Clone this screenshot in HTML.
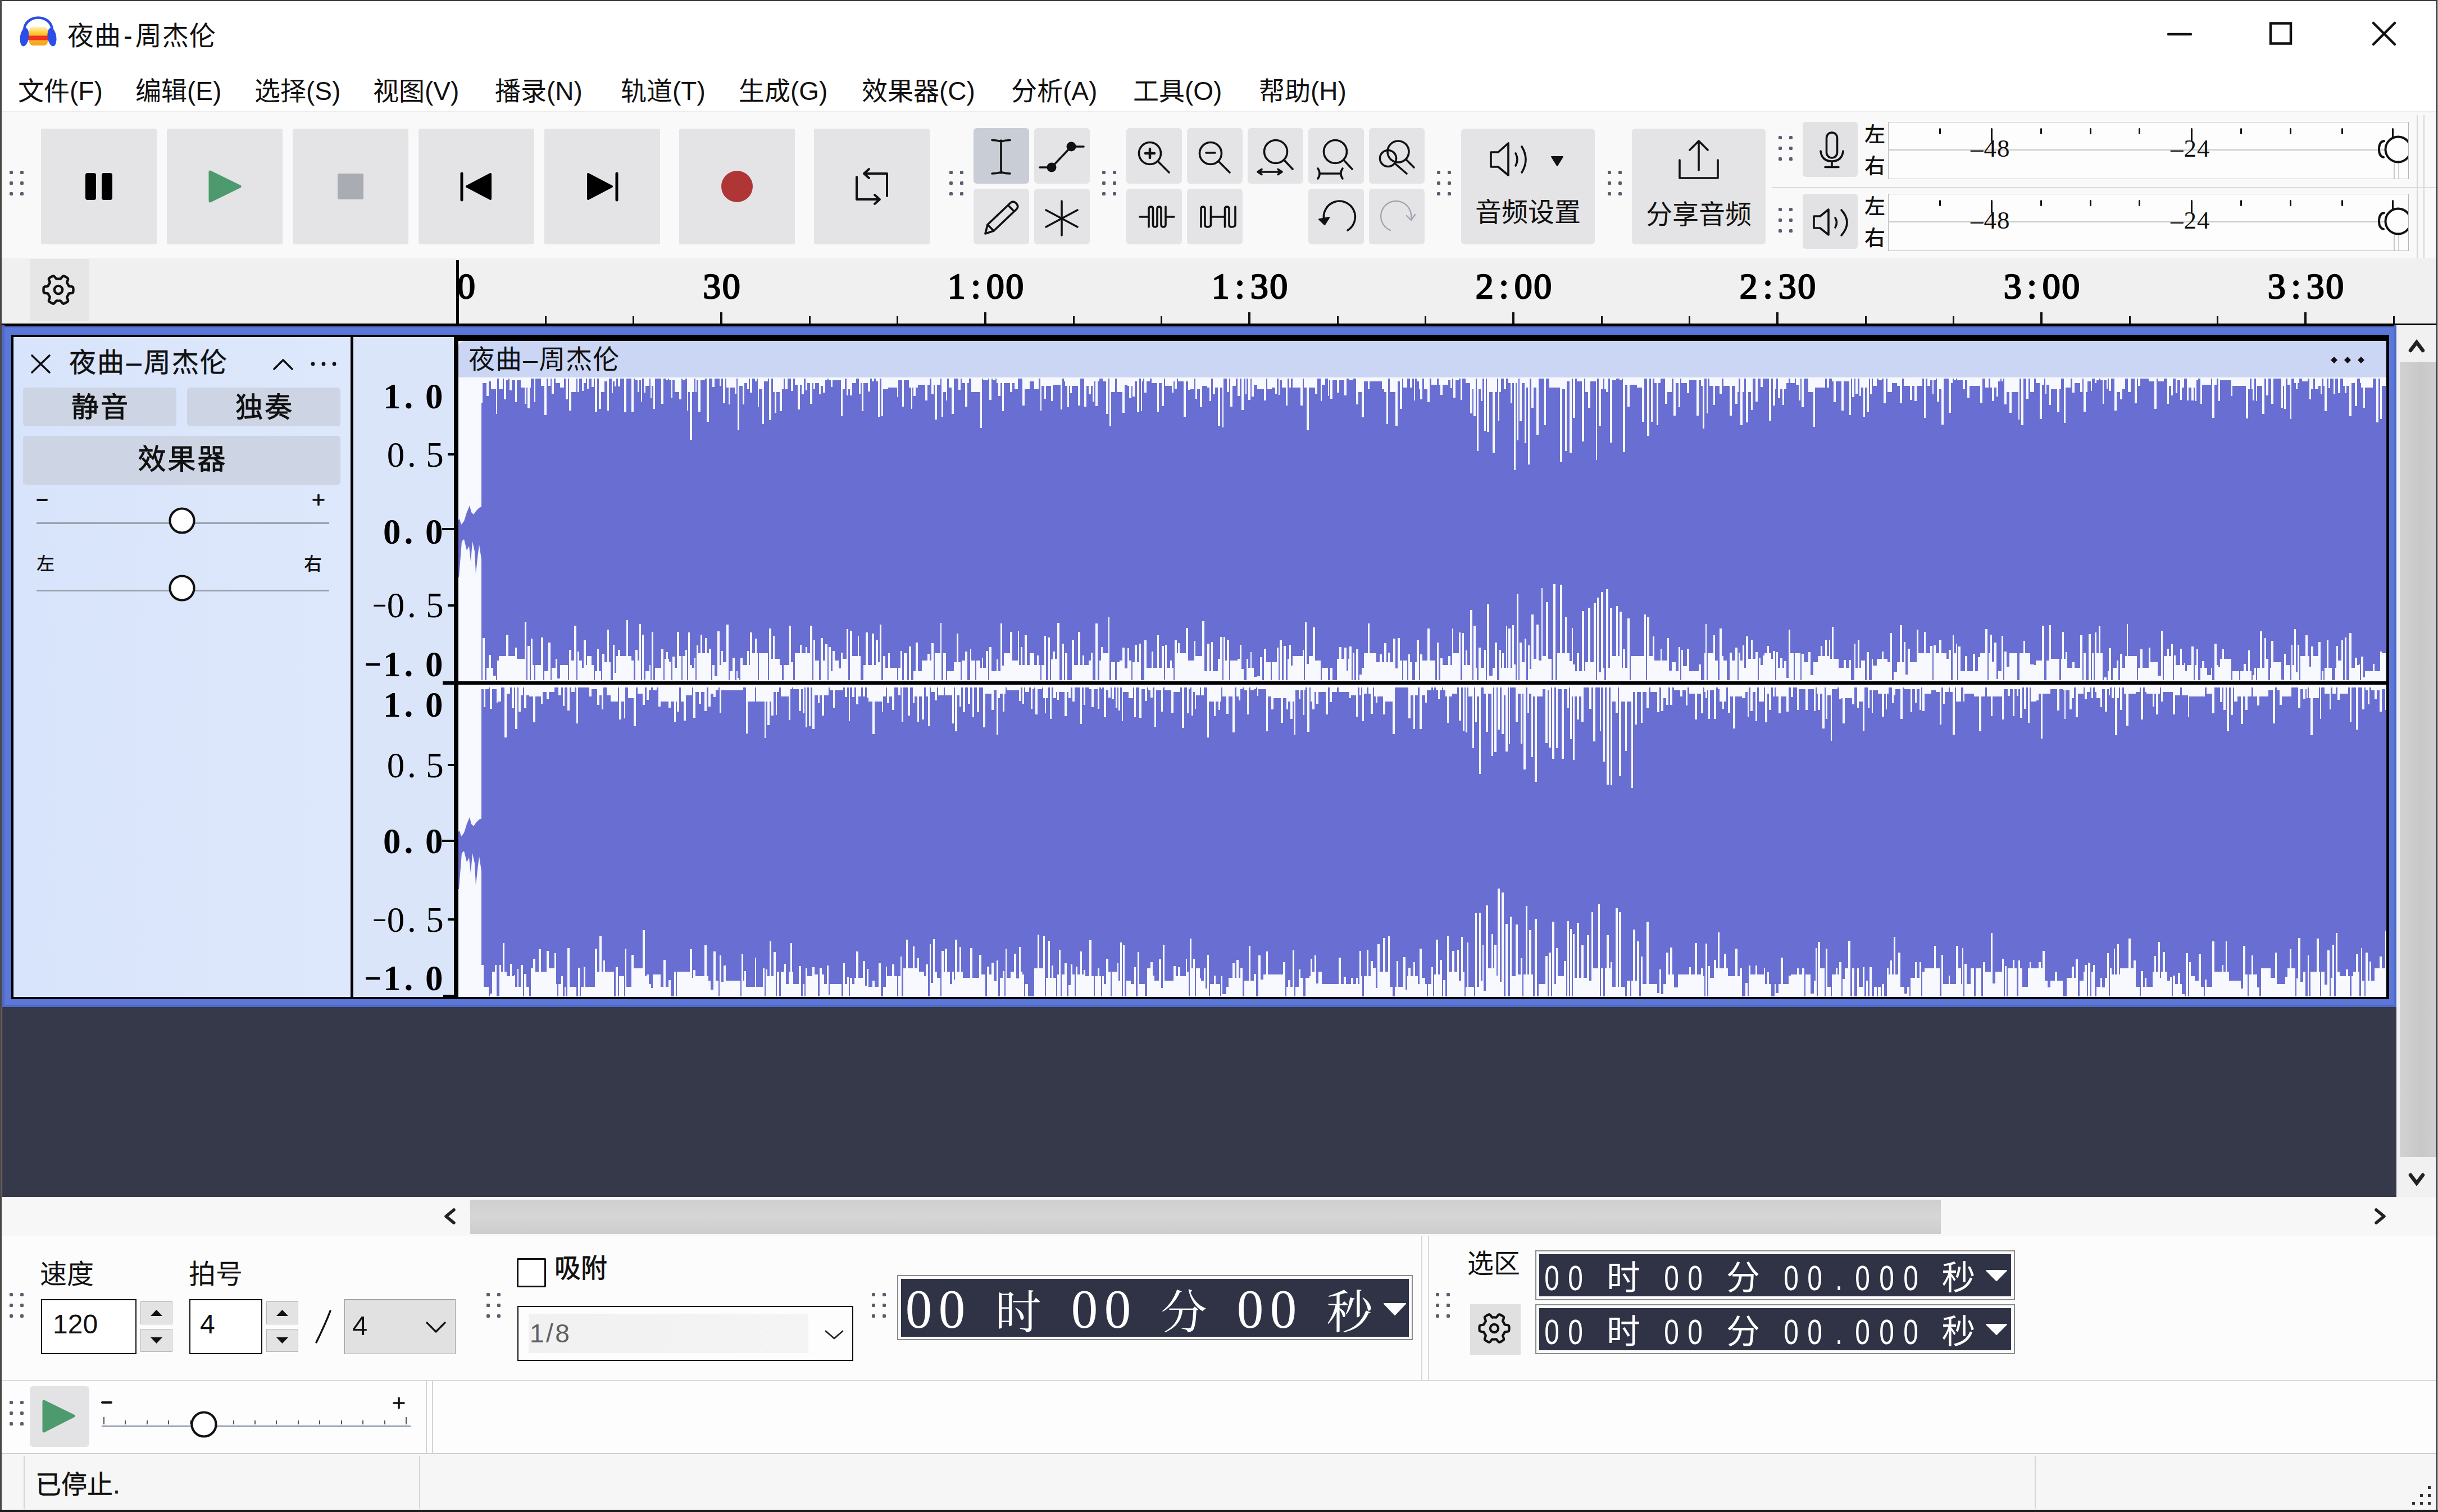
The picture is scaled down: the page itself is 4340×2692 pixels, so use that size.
<!DOCTYPE html>
<html lang="zh-CN"><head><meta charset="utf-8"><title>夜曲-周杰伦</title><style>
html,body{margin:0;padding:0;background:#fff;}
body{width:4340px;height:2692px;overflow:hidden;position:relative;font-family:"Liberation Sans","Noto Sans CJK SC",sans-serif;color:#111;}
#app{position:absolute;left:0;top:0;width:4340px;height:2692px;overflow:hidden;background:#fff;}
#app div,#app svg{position:absolute;box-sizing:border-box;}
#app svg{overflow:visible;}
.btn{background:#e3e3e5;border-radius:4px;}
.c{text-align:center;}
.cell{position:static !important;display:inline-block;text-align:center;overflow:visible;}
</style></head><body><div id="app">
<div style="left:0px;top:0px;width:4340px;height:198px;background:#ffffff;"></div>
<div style="left:0px;top:198px;width:4340px;height:262px;background:#f9f9f9;"></div>
<div style="left:0px;top:198px;width:4340px;height:2px;background:#ececec;"></div>
<div style="left:0px;top:460px;width:4340px;height:116px;background:#f0f0f0;"></div>
<div style="left:0px;top:2131px;width:4340px;height:70px;background:#f7f7f7;"></div>
<div style="left:0px;top:2201px;width:4340px;height:257px;background:#fcfcfc;"></div>
<div style="left:0px;top:2458px;width:4340px;height:130px;background:#fdfdfd;"></div>
<div style="left:0px;top:2588px;width:4340px;height:104px;background:#f6f6f6;"></div>
<svg style="left:34px;top:28px;" width="70" height="58" viewBox="0 0 70 58">
<defs><linearGradient id="ig" x1="0" y1="0" x2="0" y2="1"><stop offset="0" stop-color="#fff3b0"/><stop offset="0.35" stop-color="#fcc630"/><stop offset="1" stop-color="#f6a21a"/></linearGradient></defs>
<rect x="18" y="20" width="33" height="33" rx="7" fill="url(#ig)"/>
<rect x="15" y="35.5" width="39" height="8" fill="#f0321e"/>
<path d="M9 26 C10 -4 58 -4 59 26" fill="none" stroke="#2c4ee6" stroke-width="4.6" stroke-linecap="round"/>
<ellipse cx="9.5" cy="38" rx="7.8" ry="16.5" fill="#2c4ee6" transform="rotate(8 9.5 38)"/>
<ellipse cx="58.5" cy="38" rx="7.8" ry="16.5" fill="#2c4ee6" transform="rotate(-8 58.5 38)"/>
</svg>
<div style="left:120px;top:40px;font-size:47px;line-height:47px;white-space:nowrap;color:#111;letter-spacing:1px;">夜曲<span style="margin:0 4px">-</span>周杰伦</div>
<svg style="left:3855px;top:30px;" width="420" height="60" viewBox="0 0 420 60">
<path d="M5 31 H45" stroke="#111" stroke-width="4.5" stroke-linecap="round"/>
<rect x="187" y="11.5" width="36" height="36" fill="none" stroke="#111" stroke-width="4.5"/>
<path d="M370 11 L408 49 M408 11 L370 49" stroke="#111" stroke-width="4.5" stroke-linecap="round"/>
</svg>
<div style="left:32px;top:139px;font-size:46px;line-height:46px;white-space:nowrap;color:#111;">文件(F)</div>
<div style="left:241px;top:139px;font-size:46px;line-height:46px;white-space:nowrap;color:#111;">编辑(E)</div>
<div style="left:453px;top:139px;font-size:46px;line-height:46px;white-space:nowrap;color:#111;">选择(S)</div>
<div style="left:664px;top:139px;font-size:46px;line-height:46px;white-space:nowrap;color:#111;">视图(V)</div>
<div style="left:881px;top:139px;font-size:46px;line-height:46px;white-space:nowrap;color:#111;">播录(N)</div>
<div style="left:1105px;top:139px;font-size:46px;line-height:46px;white-space:nowrap;color:#111;">轨道(T)</div>
<div style="left:1315px;top:139px;font-size:46px;line-height:46px;white-space:nowrap;color:#111;">生成(G)</div>
<div style="left:1534px;top:139px;font-size:46px;line-height:46px;white-space:nowrap;color:#111;">效果器(C)</div>
<div style="left:1800px;top:139px;font-size:46px;line-height:46px;white-space:nowrap;color:#111;">分析(A)</div>
<div style="left:2017px;top:139px;font-size:46px;line-height:46px;white-space:nowrap;color:#111;">工具(O)</div>
<div style="left:2241px;top:139px;font-size:46px;line-height:46px;white-space:nowrap;color:#111;">帮助(H)</div>
<svg style="left:17px;top:304px;" width="26" height="46" viewBox="0 0 26 46"><rect x="0" y="0" width="6" height="6" rx="1.5" fill="#5a5d70"/><rect x="19" y="0" width="6" height="6" rx="1.5" fill="#5a5d70"/><rect x="0" y="19" width="6" height="6" rx="1.5" fill="#5a5d70"/><rect x="19" y="19" width="6" height="6" rx="1.5" fill="#5a5d70"/><rect x="0" y="38" width="6" height="6" rx="1.5" fill="#5a5d70"/><rect x="19" y="38" width="6" height="6" rx="1.5" fill="#5a5d70"/></svg>
<div style="left:73px;top:229px;width:206px;height:206px;background:#e4e4e6;border-radius:3px;"></div>
<div style="left:297px;top:229px;width:206px;height:206px;background:#e4e4e6;border-radius:3px;"></div>
<div style="left:521px;top:229px;width:206px;height:206px;background:#e4e4e6;border-radius:3px;"></div>
<div style="left:745px;top:229px;width:206px;height:206px;background:#e4e4e6;border-radius:3px;"></div>
<div style="left:969px;top:229px;width:206px;height:206px;background:#e4e4e6;border-radius:3px;"></div>
<div style="left:1209px;top:229px;width:206px;height:206px;background:#e4e4e6;border-radius:3px;"></div>
<div style="left:1449px;top:229px;width:206px;height:206px;background:#e4e4e6;border-radius:3px;"></div>
<svg style="left:73px;top:229px;" width="206" height="206" viewBox="0 0 206 206"><rect x="79" y="79" width="19" height="48" rx="4" fill="#000"/><rect x="108" y="79" width="19" height="48" rx="4" fill="#000"/></svg>
<svg style="left:297px;top:229px;" width="206" height="206" viewBox="0 0 206 206"><path d="M77 77 L130 103 L77 129 Z" fill="#4d9a6f" stroke="#4d9a6f" stroke-width="5" stroke-linejoin="round"/></svg>
<svg style="left:521px;top:229px;" width="206" height="206" viewBox="0 0 206 206"><rect x="80" y="80" width="46" height="46" rx="2" fill="#a9acb3"/></svg>
<svg style="left:745px;top:229px;" width="206" height="206" viewBox="0 0 206 206"><path d="M77 80 V127" stroke="#000" stroke-width="5" stroke-linecap="round"/><path d="M86 103 L128 81 V125 Z" fill="#000" stroke="#000" stroke-width="4" stroke-linejoin="round"/></svg>
<svg style="left:969px;top:229px;" width="206" height="206" viewBox="0 0 206 206"><path d="M129 80 V127" stroke="#000" stroke-width="5" stroke-linecap="round"/><path d="M120 103 L78 81 V125 Z" fill="#000" stroke="#000" stroke-width="4" stroke-linejoin="round"/></svg>
<svg style="left:1209px;top:229px;" width="206" height="206" viewBox="0 0 206 206"><circle cx="103" cy="103" r="28" fill="#b03535"/></svg>
<svg style="left:1449px;top:229px;" width="206" height="206" viewBox="0 0 206 206"><g fill="none" stroke="#111" stroke-width="4" stroke-linecap="round" stroke-linejoin="round"><path d="M76 86 V126 H116"/><path d="M108 118 L117 126 L108 134"/><path d="M130 120 V80 H90"/><path d="M98 72 L89 80 L98 88"/></g></svg>
<svg style="left:1690px;top:304px;" width="26" height="46" viewBox="0 0 26 46"><rect x="0" y="0" width="6" height="6" rx="1.5" fill="#5a5d70"/><rect x="19" y="0" width="6" height="6" rx="1.5" fill="#5a5d70"/><rect x="0" y="19" width="6" height="6" rx="1.5" fill="#5a5d70"/><rect x="19" y="19" width="6" height="6" rx="1.5" fill="#5a5d70"/><rect x="0" y="38" width="6" height="6" rx="1.5" fill="#5a5d70"/><rect x="19" y="38" width="6" height="6" rx="1.5" fill="#5a5d70"/></svg>
<div style="left:1733px;top:228px;width:99px;height:99px;background:#c9cdd6;border-radius:6px;"></div>
<div style="left:1841px;top:228px;width:99px;height:99px;background:#e4e4e6;border-radius:6px;"></div>
<div style="left:1733px;top:336px;width:99px;height:99px;background:#e4e4e6;border-radius:6px;"></div>
<div style="left:1841px;top:336px;width:99px;height:99px;background:#e4e4e6;border-radius:6px;"></div>
<svg style="left:1733px;top:228px;" width="99" height="99" viewBox="0 0 99 99"><g fill="none" stroke="#111" stroke-width="3.6" stroke-linecap="round" stroke-linejoin="round"><path d="M49 22 V80 M33 21.5 Q42 21.5 49 24 Q56 21.5 65 21.5 M33 81 Q42 81 49 78.5 Q56 81 65 81"/></g></svg>
<svg style="left:1841px;top:228px;" width="99" height="99" viewBox="0 0 99 99"><g fill="none" stroke="#111" stroke-width="3.6" stroke-linecap="round" stroke-linejoin="round"><path d="M10 70 H31 L66 33 H88"/></g><circle cx="31" cy="70" r="8.5" fill="#111"/><circle cx="66" cy="33" r="8.5" fill="#111"/></svg>
<svg style="left:1733px;top:336px;" width="99" height="99" viewBox="0 0 99 99"><g fill="none" stroke="#111" stroke-width="3.6" stroke-linecap="round" stroke-linejoin="round"><path d="M21 80 L25 64 L66 25 Q71 21 76 26 Q81 31 77 36 L36 75 Z"/><path d="M25 64 L36 75"/><path d="M62 30 L72 40"/></g></svg>
<svg style="left:1841px;top:336px;" width="99" height="99" viewBox="0 0 99 99"><g fill="none" stroke="#111" stroke-width="3.6" stroke-linecap="round" stroke-linejoin="round"><path d="M49 22 V83 M21 38 L77 68 M21 68 L77 38"/></g></svg>
<svg style="left:1962px;top:304px;" width="26" height="46" viewBox="0 0 26 46"><rect x="0" y="0" width="6" height="6" rx="1.5" fill="#5a5d70"/><rect x="19" y="0" width="6" height="6" rx="1.5" fill="#5a5d70"/><rect x="0" y="19" width="6" height="6" rx="1.5" fill="#5a5d70"/><rect x="19" y="19" width="6" height="6" rx="1.5" fill="#5a5d70"/><rect x="0" y="38" width="6" height="6" rx="1.5" fill="#5a5d70"/><rect x="19" y="38" width="6" height="6" rx="1.5" fill="#5a5d70"/></svg>
<div style="left:2005px;top:228px;width:99px;height:99px;background:#e4e4e6;border-radius:6px;"></div>
<div style="left:2113px;top:228px;width:99px;height:99px;background:#e4e4e6;border-radius:6px;"></div>
<div style="left:2221px;top:228px;width:99px;height:99px;background:#e4e4e6;border-radius:6px;"></div>
<div style="left:2329px;top:228px;width:99px;height:99px;background:#e4e4e6;border-radius:6px;"></div>
<div style="left:2437px;top:228px;width:99px;height:99px;background:#e4e4e6;border-radius:6px;"></div>
<div style="left:2005px;top:336px;width:99px;height:99px;background:#e4e4e6;border-radius:6px;"></div>
<div style="left:2113px;top:336px;width:99px;height:99px;background:#e4e4e6;border-radius:6px;"></div>
<div style="left:2329px;top:336px;width:99px;height:99px;background:#e4e4e6;border-radius:6px;"></div>
<div style="left:2437px;top:336px;width:99px;height:99px;background:#e4e4e6;border-radius:6px;"></div>
<svg style="left:2005px;top:228px;" width="99" height="99" viewBox="0 0 99 99"><g fill="none" stroke="#111" stroke-width="3.6" stroke-linecap="round" stroke-linejoin="round"><circle cx="42" cy="45" r="19.5"/><path d="M57 60 L76 79"/><path d="M34 45 H50 M42 37 V53" stroke-width="4.5"/></g></svg>
<svg style="left:2113px;top:228px;" width="99" height="99" viewBox="0 0 99 99"><g fill="none" stroke="#111" stroke-width="3.6" stroke-linecap="round" stroke-linejoin="round"><circle cx="42" cy="45" r="19.5"/><path d="M57 60 L76 79"/><path d="M34 44 H50"/></g></svg>
<svg style="left:2221px;top:228px;" width="99" height="99" viewBox="0 0 99 99"><g fill="none" stroke="#111" stroke-width="3.6" stroke-linecap="round" stroke-linejoin="round"><circle cx="50" cy="42" r="20.5"/><path d="M65 57 L80 73"/><path d="M19 78 H60 M25 73.5 L18 78 L25 82.5 M54 73.5 L61 78 L54 82.5"/></g></svg>
<svg style="left:2329px;top:228px;" width="99" height="99" viewBox="0 0 99 99"><g fill="none" stroke="#111" stroke-width="3.6" stroke-linecap="round" stroke-linejoin="round"><circle cx="48" cy="42" r="20.5"/><path d="M63 57 L78 73"/><path d="M20 81 H58 M17 72 Q20 76 20 81 Q20 86 17 90 M61 72 Q58 76 58 81 Q58 86 61 90"/></g></svg>
<svg style="left:2437px;top:228px;" width="99" height="99" viewBox="0 0 99 99"><g fill="none" stroke="#111" stroke-width="3.6" stroke-linecap="round" stroke-linejoin="round"><circle cx="52" cy="42" r="19"/><circle cx="34" cy="54" r="14.5"/><path d="M66 56 L80 70 M46 63 L67 81"/></g></svg>
<svg style="left:2005px;top:336px;" width="99" height="99" viewBox="0 0 99 99"><g fill="none" stroke="#111" stroke-width="3.6" stroke-linecap="round" stroke-linejoin="round" stroke-width="3.2"><path d="M24 50 H38 M72 50 H85"/><path d="M40 68 V36 Q40 32 44 32 Q47.5 32 47.5 36 V64 Q47.5 68 51 68 Q55 68 55 64 V36 Q55 32 58.5 32 Q62 32 62 36 V64 Q62 68 66 68 Q70 68 70 64 V32"/></g></svg>
<svg style="left:2113px;top:336px;" width="99" height="99" viewBox="0 0 99 99"><g fill="none" stroke="#111" stroke-width="3.6" stroke-linecap="round" stroke-linejoin="round" stroke-width="3.2"><path d="M43 50 H67"/><path d="M25 68 V36 Q25 32 28.5 32 Q32 32 32 36 V64 Q32 68 36 68 Q42.5 68 42.5 64 V32"/><path d="M67.5 68 V36 Q67.5 32 71 32 Q75 32 75 36 V64 Q75 68 79 68 Q86 68 86 64 V32"/></g></svg>
<svg style="left:2329px;top:336px;" width="99" height="99" viewBox="0 0 99 99"><g fill="none" stroke="#111" stroke-width="3.6" stroke-linecap="round" stroke-linejoin="round"><path d="M28 56 A28 28 0 1 1 70 74"/></g><path d="M20 53 L38 53 L28 64 Z" fill="#111" stroke="#111" stroke-width="2.5" stroke-linejoin="round" transform="rotate(-10 28 58)"/></svg>
<svg style="left:2437px;top:336px;" width="99" height="99" viewBox="0 0 99 99"><g fill="none" stroke="#9ba1ab" stroke-width="2.2" stroke-linecap="round" stroke-linejoin="round"><path d="M75 52 A27 27 0 1 0 38 74"/><path d="M67 48 L75 56 L82 46"/></g></svg>
<svg style="left:2558px;top:304px;" width="26" height="46" viewBox="0 0 26 46"><rect x="0" y="0" width="6" height="6" rx="1.5" fill="#5a5d70"/><rect x="19" y="0" width="6" height="6" rx="1.5" fill="#5a5d70"/><rect x="0" y="19" width="6" height="6" rx="1.5" fill="#5a5d70"/><rect x="19" y="19" width="6" height="6" rx="1.5" fill="#5a5d70"/><rect x="0" y="38" width="6" height="6" rx="1.5" fill="#5a5d70"/><rect x="19" y="38" width="6" height="6" rx="1.5" fill="#5a5d70"/></svg>
<div style="left:2601px;top:229px;width:238px;height:206px;background:#e4e4e6;border-radius:6px;"></div>
<svg style="left:2601px;top:229px;" width="238" height="206" viewBox="0 0 238 206"><g fill="none" stroke="#111" stroke-width="3.6" stroke-linecap="round" stroke-linejoin="round" stroke-width="4"><path d="M53 42 H66 L84 26 V83 L66 68 H53 Z"/><path d="M97 44 Q103 55 97 66"/><path d="M108 32 Q122 55 108 78" /><path d="M119 24 Q138 55 119 86" stroke-width="0"/></g><path d="M161 50 H181 L171 66 Z" fill="#111" stroke="#111" stroke-width="2" stroke-linejoin="round"/></svg>
<div style="left:2601px;top:354px;font-size:47px;line-height:47px;white-space:nowrap;width:238px;text-align:center;color:#111;">音频设置</div>
<svg style="left:2862px;top:304px;" width="26" height="46" viewBox="0 0 26 46"><rect x="0" y="0" width="6" height="6" rx="1.5" fill="#5a5d70"/><rect x="19" y="0" width="6" height="6" rx="1.5" fill="#5a5d70"/><rect x="0" y="19" width="6" height="6" rx="1.5" fill="#5a5d70"/><rect x="19" y="19" width="6" height="6" rx="1.5" fill="#5a5d70"/><rect x="0" y="38" width="6" height="6" rx="1.5" fill="#5a5d70"/><rect x="19" y="38" width="6" height="6" rx="1.5" fill="#5a5d70"/></svg>
<div style="left:2905px;top:229px;width:238px;height:206px;background:#e4e4e6;border-radius:6px;"></div>
<svg style="left:2905px;top:229px;" width="238" height="206" viewBox="0 0 238 206"><g fill="none" stroke="#111" stroke-width="3.6" stroke-linecap="round" stroke-linejoin="round" stroke-width="4.2"><path d="M85 56 V88 H153 V56"/><path d="M119 74 V24 M103 38 L119 22 L135 38"/></g></svg>
<div style="left:2905px;top:358px;font-size:47px;line-height:47px;white-space:nowrap;width:238px;text-align:center;color:#111;">分享音频</div>
<div style="left:3155px;top:333px;width:1185px;height:2px;background:#dcdcdc;"></div>
<div style="left:4302px;top:205px;width:2px;height:255px;background:#d8d8d8;"></div>
<div style="left:4314px;top:205px;width:2px;height:255px;background:#d8d8d8;"></div>
<svg style="left:3166px;top:242px;" width="26" height="46" viewBox="0 0 26 46"><rect x="0" y="0" width="6" height="6" rx="1.5" fill="#5a5d70"/><rect x="19" y="0" width="6" height="6" rx="1.5" fill="#5a5d70"/><rect x="0" y="19" width="6" height="6" rx="1.5" fill="#5a5d70"/><rect x="19" y="19" width="6" height="6" rx="1.5" fill="#5a5d70"/><rect x="0" y="38" width="6" height="6" rx="1.5" fill="#5a5d70"/><rect x="19" y="38" width="6" height="6" rx="1.5" fill="#5a5d70"/></svg>
<div style="left:3209px;top:217px;width:98px;height:98px;background:#e2e2e4;border-radius:6px;"></div>
<svg style="left:3209px;top:217px;" width="98" height="98" viewBox="0 0 98 98"><g fill="none" stroke="#111" stroke-width="3.6" stroke-linecap="round" stroke-linejoin="round" stroke-width="3.8"><rect x="42.5" y="19" width="19" height="45" rx="9.5"/><path d="M32 52 Q34 70 52 70 Q70 70 72 52"/><path d="M52 71 V79 M40 80.5 H64"/></g></svg>
<div style="left:3319px;top:222px;font-size:37px;line-height:37px;white-space:nowrap;color:#111;font-weight:500;">左</div>
<div style="left:3319px;top:278px;font-size:37px;line-height:37px;white-space:nowrap;color:#111;font-weight:500;">右</div>
<div style="left:3361px;top:217px;width:927px;height:102px;background:#fdfdfd;border:1.5px solid #b8b8b8;"></div>
<div style="left:3363px;top:266px;width:923px;height:1.5px;background:#c8c8c8;"></div>
<div style="left:4261px;top:289px;width:1.5px;height:29px;background:#c8c8c8;"></div>
<div style="left:4269px;top:289px;width:1.5px;height:29px;background:#d0d0d0;"></div>
<div style="left:3452px;top:228px;width:3.4px;height:11px;background:#111;border-radius:2px;"></div>
<div style="left:3544px;top:228px;width:3.4px;height:24px;background:#111;border-radius:2px;"></div>
<div style="left:3632px;top:228px;width:3.4px;height:11px;background:#111;border-radius:2px;"></div>
<div style="left:3720px;top:228px;width:3.4px;height:11px;background:#111;border-radius:2px;"></div>
<div style="left:3807px;top:228px;width:3.4px;height:11px;background:#111;border-radius:2px;"></div>
<div style="left:3900px;top:228px;width:3.4px;height:24px;background:#111;border-radius:2px;"></div>
<div style="left:3988px;top:228px;width:3.4px;height:11px;background:#111;border-radius:2px;"></div>
<div style="left:4076px;top:228px;width:3.4px;height:11px;background:#111;border-radius:2px;"></div>
<div style="left:4168px;top:228px;width:3.4px;height:11px;background:#111;border-radius:2px;"></div>
<div style="left:4258px;top:228px;width:3.4px;height:24px;background:#111;border-radius:2px;"></div>
<div style="left:3508px;top:242px;font-size:45px;line-height:45px;white-space:nowrap;color:#111;font-family:'Liberation Serif',serif;letter-spacing:1px;">–48</div>
<div style="left:3864px;top:242px;font-size:45px;line-height:45px;white-space:nowrap;color:#111;font-family:'Liberation Serif',serif;letter-spacing:1px;">–24</div>
<svg style="left:4227px;top:218px;overflow:hidden;" width="60" height="100" viewBox="0 0 60 100"><circle cx="42" cy="48" r="22.5" fill="#fdfdfd" stroke="#111" stroke-width="4"/><path d="M17 33 Q8 34 8 48 Q8 60 16 62" fill="none" stroke="#111" stroke-width="4" stroke-linecap="round"/></svg>
<svg style="left:3166px;top:370px;" width="26" height="46" viewBox="0 0 26 46"><rect x="0" y="0" width="6" height="6" rx="1.5" fill="#5a5d70"/><rect x="19" y="0" width="6" height="6" rx="1.5" fill="#5a5d70"/><rect x="0" y="19" width="6" height="6" rx="1.5" fill="#5a5d70"/><rect x="19" y="19" width="6" height="6" rx="1.5" fill="#5a5d70"/><rect x="0" y="38" width="6" height="6" rx="1.5" fill="#5a5d70"/><rect x="19" y="38" width="6" height="6" rx="1.5" fill="#5a5d70"/></svg>
<div style="left:3209px;top:345px;width:98px;height:98px;background:#e2e2e4;border-radius:6px;"></div>
<svg style="left:3209px;top:345px;" width="98" height="98" viewBox="0 0 98 98"><g fill="none" stroke="#111" stroke-width="3.6" stroke-linecap="round" stroke-linejoin="round" stroke-width="3.8"><path d="M20 40 H31 L46 28 V73 L31 61 H20 Z"/><path d="M58 43 Q63 51 58 60"/><path d="M69 29 Q89 51 69 74"/></g></svg>
<div style="left:3319px;top:350px;font-size:37px;line-height:37px;white-space:nowrap;color:#111;font-weight:500;">左</div>
<div style="left:3319px;top:406px;font-size:37px;line-height:37px;white-space:nowrap;color:#111;font-weight:500;">右</div>
<div style="left:3361px;top:345px;width:927px;height:102px;background:#fdfdfd;border:1.5px solid #b8b8b8;"></div>
<div style="left:3363px;top:394px;width:923px;height:1.5px;background:#c8c8c8;"></div>
<div style="left:4261px;top:417px;width:1.5px;height:29px;background:#c8c8c8;"></div>
<div style="left:4269px;top:417px;width:1.5px;height:29px;background:#d0d0d0;"></div>
<div style="left:3452px;top:356px;width:3.4px;height:11px;background:#111;border-radius:2px;"></div>
<div style="left:3544px;top:356px;width:3.4px;height:24px;background:#111;border-radius:2px;"></div>
<div style="left:3632px;top:356px;width:3.4px;height:11px;background:#111;border-radius:2px;"></div>
<div style="left:3720px;top:356px;width:3.4px;height:11px;background:#111;border-radius:2px;"></div>
<div style="left:3807px;top:356px;width:3.4px;height:11px;background:#111;border-radius:2px;"></div>
<div style="left:3900px;top:356px;width:3.4px;height:24px;background:#111;border-radius:2px;"></div>
<div style="left:3988px;top:356px;width:3.4px;height:11px;background:#111;border-radius:2px;"></div>
<div style="left:4076px;top:356px;width:3.4px;height:11px;background:#111;border-radius:2px;"></div>
<div style="left:4168px;top:356px;width:3.4px;height:11px;background:#111;border-radius:2px;"></div>
<div style="left:4258px;top:356px;width:3.4px;height:24px;background:#111;border-radius:2px;"></div>
<div style="left:3508px;top:370px;font-size:45px;line-height:45px;white-space:nowrap;color:#111;font-family:'Liberation Serif',serif;letter-spacing:1px;">–48</div>
<div style="left:3864px;top:370px;font-size:45px;line-height:45px;white-space:nowrap;color:#111;font-family:'Liberation Serif',serif;letter-spacing:1px;">–24</div>
<svg style="left:4227px;top:346px;overflow:hidden;" width="60" height="100" viewBox="0 0 60 100"><circle cx="42" cy="48" r="22.5" fill="#fdfdfd" stroke="#111" stroke-width="4"/><path d="M17 33 Q8 34 8 48 Q8 60 16 62" fill="none" stroke="#111" stroke-width="4" stroke-linecap="round"/></svg>
<div style="left:53px;top:461px;width:106px;height:110px;background:#e6e6e6;"></div>
<svg style="left:64px;top:476px" width="80" height="80" viewBox="-40 -40 80 80"><g fill="none" stroke="#111" stroke-width="4.4" stroke-linejoin="round"><path d="M26.5 0.0 L26.5 1.2 L26.4 2.3 L26.3 3.5 L26.0 4.6 L24.7 5.5 L22.3 6.0 L19.9 6.3 L18.5 6.7 L18.1 7.5 L17.8 8.3 L17.4 9.1 L17.0 9.8 L16.5 10.5 L16.1 11.2 L15.6 11.9 L15.1 12.7 L15.4 14.1 L16.3 16.3 L17.1 18.6 L17.0 20.2 L16.1 21.0 L15.2 21.7 L14.2 22.3 L13.3 22.9 L12.2 23.5 L11.2 24.0 L10.1 24.5 L9.0 24.8 L7.6 24.1 L6.0 22.3 L4.5 20.4 L3.4 19.4 L2.6 19.4 L1.7 19.5 L0.9 19.6 L0.0 19.6 L-0.9 19.6 L-1.7 19.5 L-2.6 19.4 L-3.4 19.4 L-4.5 20.4 L-6.0 22.3 L-7.6 24.1 L-9.0 24.8 L-10.1 24.5 L-11.2 24.0 L-12.2 23.5 L-13.2 22.9 L-14.2 22.3 L-15.2 21.7 L-16.1 21.0 L-17.0 20.2 L-17.1 18.6 L-16.3 16.3 L-15.4 14.1 L-15.1 12.7 L-15.6 11.9 L-16.1 11.2 L-16.5 10.5 L-17.0 9.8 L-17.4 9.1 L-17.8 8.3 L-18.1 7.5 L-18.5 6.7 L-19.9 6.3 L-22.3 6.0 L-24.7 5.5 L-26.0 4.6 L-26.3 3.5 L-26.4 2.3 L-26.5 1.2 L-26.5 0.0 L-26.5 -1.2 L-26.4 -2.3 L-26.3 -3.5 L-26.0 -4.6 L-24.7 -5.5 L-22.3 -6.0 L-19.9 -6.3 L-18.5 -6.7 L-18.1 -7.5 L-17.8 -8.3 L-17.4 -9.1 L-17.0 -9.8 L-16.5 -10.5 L-16.1 -11.2 L-15.6 -11.9 L-15.1 -12.7 L-15.4 -14.1 L-16.3 -16.3 L-17.1 -18.6 L-17.0 -20.2 L-16.1 -21.0 L-15.2 -21.7 L-14.2 -22.3 L-13.3 -22.9 L-12.2 -23.5 L-11.2 -24.0 L-10.1 -24.5 L-9.0 -24.8 L-7.6 -24.1 L-6.0 -22.3 L-4.5 -20.4 L-3.4 -19.4 L-2.6 -19.4 L-1.7 -19.5 L-0.9 -19.6 L-0.0 -19.6 L0.9 -19.6 L1.7 -19.5 L2.6 -19.4 L3.4 -19.4 L4.5 -20.4 L6.0 -22.3 L7.6 -24.1 L9.0 -24.8 L10.1 -24.5 L11.2 -24.0 L12.2 -23.5 L13.2 -22.9 L14.2 -22.3 L15.2 -21.7 L16.1 -21.0 L17.0 -20.2 L17.1 -18.6 L16.3 -16.3 L15.4 -14.1 L15.1 -12.7 L15.6 -11.9 L16.1 -11.2 L16.5 -10.5 L17.0 -9.8 L17.4 -9.1 L17.8 -8.3 L18.1 -7.5 L18.5 -6.7 L19.9 -6.3 L22.3 -6.0 L24.7 -5.5 L26.0 -4.6 L26.3 -3.5 L26.4 -2.3 L26.5 -1.2Z"/><circle cx="0" cy="0" r="7.155"/></g></svg>
<div style="left:812px;top:463px;width:5px;height:114px;background:#000;"></div>
<div style="left:970px;top:563px;width:3px;height:13px;background:#111;"></div>
<div style="left:1126px;top:563px;width:3px;height:13px;background:#111;"></div>
<div style="left:1282px;top:556px;width:4px;height:20px;background:#111;"></div>
<div style="left:1440px;top:563px;width:3px;height:13px;background:#111;"></div>
<div style="left:1596px;top:563px;width:3px;height:13px;background:#111;"></div>
<div style="left:1752px;top:556px;width:4px;height:20px;background:#111;"></div>
<div style="left:1910px;top:563px;width:3px;height:13px;background:#111;"></div>
<div style="left:2066px;top:563px;width:3px;height:13px;background:#111;"></div>
<div style="left:2222px;top:556px;width:4px;height:20px;background:#111;"></div>
<div style="left:2380px;top:563px;width:3px;height:13px;background:#111;"></div>
<div style="left:2536px;top:563px;width:3px;height:13px;background:#111;"></div>
<div style="left:2692px;top:556px;width:4px;height:20px;background:#111;"></div>
<div style="left:2850px;top:563px;width:3px;height:13px;background:#111;"></div>
<div style="left:3006px;top:563px;width:3px;height:13px;background:#111;"></div>
<div style="left:3162px;top:556px;width:4px;height:20px;background:#111;"></div>
<div style="left:3320px;top:563px;width:3px;height:13px;background:#111;"></div>
<div style="left:3476px;top:563px;width:3px;height:13px;background:#111;"></div>
<div style="left:3632px;top:556px;width:4px;height:20px;background:#111;"></div>
<div style="left:3790px;top:563px;width:3px;height:13px;background:#111;"></div>
<div style="left:3946px;top:563px;width:3px;height:13px;background:#111;"></div>
<div style="left:4102px;top:556px;width:4px;height:20px;background:#111;"></div>
<div style="left:4260px;top:563px;width:3px;height:13px;background:#111;"></div>
<div style="left:812.75px;top:478px;font-size:64px;line-height:64px;white-space:nowrap;font-family:'Liberation Serif',serif;font-weight:normal;color:#000;-webkit-text-stroke:2.3px #000;"><span class="cell" style="width:34.5px;">0</span></div>
<div style="left:812px;top:463px;width:5px;height:114px;background:#000;"></div>
<div style="left:1250.0px;top:478px;font-size:64px;line-height:64px;white-space:nowrap;font-family:'Liberation Serif',serif;font-weight:normal;color:#000;-webkit-text-stroke:2.3px #000;"><span class="cell" style="width:34.5px;">3</span><span class="cell" style="width:34.5px;">0</span></div>
<div style="left:1685.5px;top:478px;font-size:64px;line-height:64px;white-space:nowrap;font-family:'Liberation Serif',serif;font-weight:normal;color:#000;-webkit-text-stroke:2.3px #000;"><span class="cell" style="width:34.5px;">1</span><span class="cell" style="width:34.5px;">:</span><span class="cell" style="width:34.5px;">0</span><span class="cell" style="width:34.5px;">0</span></div>
<div style="left:2155.5px;top:478px;font-size:64px;line-height:64px;white-space:nowrap;font-family:'Liberation Serif',serif;font-weight:normal;color:#000;-webkit-text-stroke:2.3px #000;"><span class="cell" style="width:34.5px;">1</span><span class="cell" style="width:34.5px;">:</span><span class="cell" style="width:34.5px;">3</span><span class="cell" style="width:34.5px;">0</span></div>
<div style="left:2625.5px;top:478px;font-size:64px;line-height:64px;white-space:nowrap;font-family:'Liberation Serif',serif;font-weight:normal;color:#000;-webkit-text-stroke:2.3px #000;"><span class="cell" style="width:34.5px;">2</span><span class="cell" style="width:34.5px;">:</span><span class="cell" style="width:34.5px;">0</span><span class="cell" style="width:34.5px;">0</span></div>
<div style="left:3095.5px;top:478px;font-size:64px;line-height:64px;white-space:nowrap;font-family:'Liberation Serif',serif;font-weight:normal;color:#000;-webkit-text-stroke:2.3px #000;"><span class="cell" style="width:34.5px;">2</span><span class="cell" style="width:34.5px;">:</span><span class="cell" style="width:34.5px;">3</span><span class="cell" style="width:34.5px;">0</span></div>
<div style="left:3565.5px;top:478px;font-size:64px;line-height:64px;white-space:nowrap;font-family:'Liberation Serif',serif;font-weight:normal;color:#000;-webkit-text-stroke:2.3px #000;"><span class="cell" style="width:34.5px;">3</span><span class="cell" style="width:34.5px;">:</span><span class="cell" style="width:34.5px;">0</span><span class="cell" style="width:34.5px;">0</span></div>
<div style="left:4035.5px;top:478px;font-size:64px;line-height:64px;white-space:nowrap;font-family:'Liberation Serif',serif;font-weight:normal;color:#000;-webkit-text-stroke:2.3px #000;"><span class="cell" style="width:34.5px;">3</span><span class="cell" style="width:34.5px;">:</span><span class="cell" style="width:34.5px;">3</span><span class="cell" style="width:34.5px;">0</span></div>
<div style="left:0px;top:575.5px;width:4266px;height:5.5px;background:#000;"></div>
<div style="left:4266px;top:576px;width:71px;height:3.2px;background:#000;"></div>
<div style="left:3px;top:581px;width:4263px;height:1212px;background:#5b78d8;"></div>
<div style="left:3px;top:581px;width:4263px;height:2px;background:#4a63c0;"></div>
<div style="left:4px;top:579px;width:4px;height:1214px;background:#4f69c8;"></div>
<div style="left:4262px;top:579px;width:4px;height:1214px;background:#4f69c8;"></div>
<div style="left:4px;top:1789px;width:4262px;height:4px;background:#4f69c8;"></div>
<div style="left:20px;top:596px;width:4232.5px;height:1183px;background:#000;"></div>
<div style="left:24px;top:600px;width:600px;height:1175px;background:linear-gradient(90deg,#d8e4fb,#dee8fc);"></div>
<div style="left:629px;top:600px;width:179px;height:1175px;background:#dbe5fa;"></div>
<div style="left:816px;top:607px;width:3432px;height:606px;background:#f8f9fe;"></div>
<div style="left:816px;top:1219px;width:3432px;height:556px;background:#f8f9fe;"></div>
<div style="left:788px;top:1213px;width:3459px;height:6px;background:#000;"></div>
<div style="left:816px;top:607px;width:3432px;height:65px;background:#cbd6f5;border-top-left-radius:11px;"></div>
<div style="left:834px;top:616px;font-size:47px;line-height:47px;white-space:nowrap;color:#111;letter-spacing:1px;">夜曲<span style="margin:0 1px">–</span>周杰伦</div>
<svg style="left:4143px;top:631px;" width="70" height="20" viewBox="0 0 70 20"><g fill="#111"><path d="M12 4 L18 10 L12 16 L6 10Z M36 4 L42 10 L36 16 L30 10Z M60 4 L66 10 L60 16 L54 10Z"/></g></svg>
<div style="left:4px;top:1793px;width:4262px;height:338px;background:#353949;"></div>
<svg style="left:0;top:0" width="4340" height="2692" viewBox="0 0 4340 2692"><g fill="#696fd2" shape-rendering="crispEdges"><path d="M857 942V717h2V682h4V682h3V705h4V679h4V693h4V693h5V737h2V674h3V693h7V674h2V711h4V677h4V674h2V695h4V677h6V716h3V677h7V690h7V719h3V690h2V727h4V690h2V674h3V674h3V716h2V674h7V674h3V687h4V687h2V739h4V674h3V687h4V674h2V701h4V674h3V682h3V682h5V690h7V674h3V711h4V674h2V731h4V698h5V698h4V674h2V698h3V674h3V674h2V696h3V682h4V674h2V692h3V674h5V689h4V674h2V733h4V674h3V728h4V698h2V698h4V679h5V731h3V674h3V674h2V700h2V679h3V688h3V674h3V688h4V674h7V734h4V674h3V674h6V733h4V674h3V677h4V698h3V677h3V715h2V674h3V699h3V687h7V674h2V709h2V687h3V728h3V674h3V674h3V674h3V674h2V719h4V674h2V674h3V677h3V674h2V677h4V708h2V677h4V698h4V698h4V711h4V674h2V677h5V674h3V731h2V698h3V783h4V698h4V674h2V698h2V677h3V733h4V677h3V677h5V674h3V751h4V674h4V674h2V689h4V674h5V674h4V687h3V674h3V718h4V674h2V690h4V720h2V690h5V690h4V701h3V674h2V766h3V687h2V687h4V720h3V682h5V693h3V674h2V699h4V674h5V679h3V674h2V724h2V693h6V755h3V679h7V674h2V748h4V674h3V698h3V735h3V698h6V732h4V693h3V674h2V693h5V674h3V674h3V696h4V674h3V685h5V729h4V685h3V702h4V674h3V695h3V682h5V719h4V682h2V693h3V682h7V702h3V687h4V699h4V677h4V674h2V677h4V689h3V677h4V677h7V677h4V741h3V693h4V674h3V704h3V693h3V704h4V682h7V674h3V674h2V701h3V682h2V732h3V682h4V682h4V697h4V674h3V679h4V674h3V679h4V742h3V674h3V741h3V693h4V693h5V690h3V690h6V690h7V707h2V677h4V677h3V724h3V677h6V677h3V690h4V728h2V690h2V705h4V690h4V685h7V685h6V713h4V685h4V674h3V702h4V685h2V747h4V685h6V674h2V742h3V698h5V713h2V674h3V690h5V737h4V674h5V674h3V694h4V674h2V682h6V724h4V682h3V674h2V674h2V698h7V698h2V698h7V762h3V674h2V677h5V677h4V674h2V712h4V674h2V677h5V674h2V682h3V705h4V682h3V732h3V682h7V682h4V698h4V682h4V693h6V674h2V674h3V674h3V722h4V693h4V693h5V679h4V679h4V693h5V693h3V674h3V731h2V687h5V710h3V687h2V687h2V687h3V687h2V714h3V685h4V685h4V685h4V685h2V729h3V674h3V679h2V687h4V725h3V687h2V700h3V687h4V687h7V722h4V674h4V674h3V724h4V687h4V702h4V687h3V715h3V679h2V723h4V679h3V674h3V674h3V679h6V737h4V674h2V759h3V698h7V674h3V698h5V698h5V735h4V685h5V687h3V709h4V687h2V706h4V679h4V734h4V674h3V732h2V679h2V674h2V699h4V679h6V674h3V682h3V682h7V733h3V682h5V723h4V674h2V687h3V687h6V687h3V699h3V679h2V692h4V674h2V679h3V679h7V742h4V679h4V694h4V693h7V674h2V710h3V693h5V725h4V687h4V687h5V690h4V714h3V674h3V702h4V690h5V758h4V690h4V761h2V674h3V674h3V698h4V674h2V724h4V687h6V674h3V705h4V674h3V730h4V674h3V702h2V674h3V712h4V674h2V706h4V685h6V693h5V693h4V693h3V713h4V674h2V693h6V693h2V690h6V701h3V674h3V703h2V677h4V690h3V690h4V722h3V674h3V690h3V674h3V690h7V690h7V722h4V674h2V690h2V690h3V766h4V690h7V690h4V701h4V674h3V674h3V714h2V685h6V674h3V674h2V705h2V677h2V710h4V677h2V677h6V699h4V677h4V677h5V704h4V674h3V674h2V677h4V677h2V674h3V674h3V720h4V698h2V698h4V743h4V679h7V693h3V679h7V679h5V679h6V679h4V693h4V698h4V755h3V674h3V698h6V698h4V758h4V679h4V728h4V674h2V690h7V674h2V674h3V690h4V674h3V713h2V674h3V679h4V693h2V711h4V674h3V693h6V716h4V674h3V685h7V685h3V674h3V685h3V703h4V685h5V685h5V677h4V691h3V674h2V708h4V677h6V674h3V712h3V674h3V674h3V682h3V682h5V736h4V693h2V741h4V674h2V803h3V693h4V714h3V674h3V767h3V674h2V769h4V698h6V806h4V698h4V674h2V749h2V698h3V674h2V674h3V693h4V674h2V674h2V682h4V718h3V682h3V837h3V682h2V784h3V674h2V750h4V682h5V789h3V690h3V827h3V674h3V726h4V690h5V774h4V674h5V674h2V674h3V757h3V674h4V674h2V690h4V690h3V690h4V690h3V690h5V822h4V693h5V803h3V679h5V806h4V674h2V744h4V674h3V679h4V679h5V786h4V674h2V698h5V726h4V679h6V679h4V819h2V674h3V758h4V693h4V674h2V693h3V698h4V674h3V788h4V677h7V674h3V674h3V677h4V674h2V805h4V685h4V724h4V685h2V685h4V685h7V690h5V690h4V751h4V674h3V674h2V776h4V674h3V751h3V674h3V682h4V757h3V682h4V674h2V674h6V719h4V698h3V698h5V674h3V740h4V682h5V725h3V674h2V682h3V682h7V700h4V677h7V677h6V740h4V677h4V687h3V763h3V674h2V674h2V736h2V674h3V687h7V721h3V687h5V687h3V701h4V674h3V687h6V687h3V687h2V740h4V687h6V719h4V698h2V674h3V757h4V698h3V674h3V752h4V698h5V730h3V674h5V715h4V674h2V674h3V689h4V674h3V674h5V674h3V749h4V674h3V722h4V693h2V674h3V709h4V693h4V721h3V693h4V682h4V674h3V682h6V682h2V674h2V685h5V713h3V674h2V725h4V674h3V674h2V674h3V698h4V698h5V760h3V690h5V690h5V690h3V690h5V674h3V690h4V674h2V674h3V679h3V716h4V679h5V679h5V731h4V679h4V679h6V739h3V674h2V707h4V674h2V701h4V674h3V705h3V690h4V742h3V690h3V733h4V674h2V702h3V674h2V687h7V674h3V677h6V674h3V718h4V674h3V698h5V698h3V682h3V682h6V687h5V718h4V674h3V687h3V687h4V687h4V712h4V687h4V714h4V687h3V687h7V674h3V744h3V674h3V687h5V677h4V702h2V677h4V674h2V715h4V693h4V756h4V674h5V674h4V735h4V682h3V674h2V677h4V674h2V677h2V677h4V677h4V693h4V677h4V708h4V687h6V687h4V687h5V687h4V717h4V674h5V690h4V690h2V674h3V690h3V714h4V690h4V706h3V679h4V674h2V679h3V674h2V720h4V698h5V735h4V698h4V698h6V698h2V747h2V674h3V757h4V674h3V674h2V710h4V674h3V698h7V674h3V682h7V746h4V685h4V674h2V701h2V685h5V721h3V693h7V693h4V734h4V693h3V674h2V674h3V753h3V690h3V690h6V674h3V699h4V682h5V682h5V698h4V674h2V733h4V698h3V679h2V679h4V696h2V674h3V674h2V682h3V677h4V674h3V677h4V719h2V677h5V692h2V674h2V696h4V674h3V674h3V731h4V698h3V698h3V711h4V693h5V674h3V674h2V698h5V674h7V718h4V674h2V687h4V674h4V674h4V674h5V674h2V679h3V679h7V728h4V674h2V679h6V679h3V679h2V674h6V719h3V687h4V704h3V674h2V674h3V700h3V677h5V712h3V690h4V674h2V674h3V713h3V690h5V713h4V690h2V714h3V677h3V674h2V674h2V719h3V685h4V685h5V685h7V674h2V744h4V685h4V674h3V714h3V677h4V677h3V677h7V677h6V705h2V687h5V687h7V687h2V687h6V687h4V745h4V693h3V674h3V693h2V713h3V674h3V714h2V687h5V687h4V737h4V674h3V704h4V674h3V674h2V719h4V674h6V674h5V674h3V726h3V687h2V728h3V674h3V685h5V746h2V674h2V674h3V682h3V693h3V682h3V674h2V674h3V679h6V679h4V674h3V711h3V693h4V674h3V693h6V687h4V702h2V674h3V687h2V732h4V674h3V691h3V674h3V674h3V702h3V674h2V674h3V700h4V674h2V674h3V687h3V700h3V687h5V741h4V682h6V723h4V674h3V674h2V682h2V690h4V726h3V690h4V690h6V690h4V674h3V674h3V752h4V674h3V746h3V687h6V687h1V942V1163h-1V1163h-6V1160h-3V1195h-3V1195h-4V1195h-3V1182h-3V1195h-4V1195h-6V1195h-4V1206h-3V1169h-4V1211h-2V1183h-2V1184h-3V1171h-4V1189h-6V1127h-4V1211h-5V1135h-3V1211h-3V1140h-3V1176h-2V1176h-4V1150h-3V1189h-2V1211h-3V1211h-3V1189h-3V1189h-3V1140h-3V1189h-4V1211h-2V1195h-3V1211h-2V1143h-4V1168h-6V1168h-3V1151h-4V1187h-3V1168h-3V1131h-4V1168h-6V1168h-3V1211h-2V1148h-3V1197h-3V1120h-3V1184h-3V1148h-2V1211h-2V1184h-5V1184h-3V1164h-3V1211h-2V1210h-3V1179h-3V1179h-5V1179h-6V1141h-4V1189h-2V1211h-3V1173h-4V1136h-3V1189h-4V1124h-4V1189h-5V1211h-2V1189h-3V1202h-3V1211h-2V1195h-3V1158h-3V1195h-4V1182h-4V1195h-6V1211h-2V1195h-7V1195h-5V1211h-2V1173h-6V1173h-7V1156h-3V1173h-4V1188h-3V1184h-3V1146h-4V1211h-4V1189h-2V1202h-7V1189h-5V1177h-4V1189h-3V1211h-2V1211h-2V1156h-3V1184h-3V1211h-2V1151h-4V1184h-5V1184h-3V1195h-3V1180h-2V1184h-4V1155h-3V1184h-5V1184h-3V1167h-3V1211h-2V1147h-3V1168h-4V1155h-3V1168h-6V1211h-2V1123h-3V1203h-6V1179h-2V1179h-4V1179h-7V1153h-3V1189h-2V1189h-5V1189h-4V1156h-4V1189h-4V1211h-2V1168h-4V1168h-7V1168h-5V1111h-2V1168h-3V1189h-5V1164h-4V1211h-3V1176h-3V1189h-4V1189h-3V1211h-3V1154h-4V1195h-2V1211h-2V1206h-5V1211h-2V1163h-4V1115h-3V1163h-4V1126h-3V1211h-2V1163h-3V1211h-2V1129h-4V1211h-2V1211h-3V1163h-4V1211h-2V1131h-4V1189h-5V1189h-5V1179h-4V1189h-3V1189h-6V1161h-3V1173h-3V1125h-3V1173h-2V1211h-3V1173h-4V1173h-4V1173h-7V1113h-3V1176h-5V1211h-2V1211h-2V1114h-4V1176h-4V1176h-7V1184h-3V1183h-7V1163h-3V1163h-4V1163h-2V1141h-3V1163h-4V1163h-3V1211h-2V1211h-2V1163h-6V1163h-4V1163h-4V1187h-5V1160h-4V1211h-2V1132h-3V1195h-2V1195h-4V1209h-3V1144h-4V1178h-4V1130h-3V1163h-3V1211h-2V1120h-4V1163h-5V1163h-4V1170h-4V1195h-5V1164h-4V1195h-6V1195h-4V1168h-4V1195h-4V1195h-4V1151h-4V1211h-2V1146h-2V1163h-4V1131h-2V1211h-3V1157h-4V1173h-4V1163h-5V1163h-4V1139h-4V1163h-4V1163h-2V1149h-4V1211h-2V1150h-4V1163h-5V1163h-3V1125h-3V1163h-3V1163h-7V1121h-3V1179h-4V1179h-4V1179h-4V1155h-4V1201h-4V1143h-3V1179h-3V1113h-4V1179h-5V1196h-6V1211h-3V1127h-3V1179h-5V1173h-3V1173h-4V1160h-3V1173h-6V1173h-3V1185h-7V1173h-2V1211h-3V1211h-2V1161h-4V1211h-3V1176h-3V1176h-4V1189h-3V1139h-3V1189h-4V1146h-2V1211h-4V1211h-2V1175h-3V1189h-6V1175h-4V1189h-4V1189h-5V1173h-5V1173h-4V1116h-3V1173h-3V1140h-2V1168h-4V1139h-3V1168h-5V1150h-3V1168h-5V1179h-5V1179h-3V1202h-5V1161h-4V1179h-3V1179h-2V1179h-3V1164h-4V1211h-2V1163h-3V1163h-5V1163h-2V1211h-2V1163h-6V1121h-3V1207h-4V1177h-4V1189h-3V1172h-4V1189h-4V1161h-3V1211h-2V1159h-4V1173h-3V1163h-4V1150h-3V1163h-5V1167h-3V1184h-4V1172h-3V1211h-2V1161h-4V1173h-5V1139h-3V1173h-5V1133h-4V1189h-3V1149h-3V1176h-4V1162h-3V1211h-2V1153h-4V1176h-6V1162h-4V1211h-2V1211h-3V1176h-6V1168h-3V1119h-4V1211h-3V1176h-5V1131h-3V1163h-7V1163h-3V1211h-2V1111h-2V1163h-2V1211h-3V1211h-3V1183h-4V1195h-4V1195h-6V1195h-7V1155h-4V1186h-7V1157h-3V1211h-2V1152h-3V1195h-5V1179h-4V1179h-3V1194h-5V1136h-3V1176h-4V1176h-6V1155h-2V1176h-4V1176h-3V1176h-4V1133h-3V1168h-3V1168h-3V1099h-4V1211h-2V1094h-3V1168h-4V1168h-4V1168h-5V1168h-7V1168h-4V1211h-2V1101h-4V1189h-4V1156h-4V1189h-2V1089h-4V1168h-3V1079h-3V1168h-7V1083h-4V1189h-3V1049h-4V1211h-3V1189h-2V1054h-4V1197h-4V1064h-3V1211h-2V1074h-4V1179h-6V1082h-4V1179h-5V1195h-2V1088h-4V1195h-5V1163h-4V1195h-3V1183h-4V1118h-2V1177h-4V1163h-5V1099h-3V1163h-5V1041h-4V1163h-5V1211h-3V1040h-4V1211h-3V1173h-4V1173h-2V1072h-4V1168h-3V1168h-3V1047h-2V1176h-5V1112h-4V1173h-5V1094h-4V1191h-3V1149h-3V1211h-3V1137h-3V1179h-5V1144h-4V1211h-2V1057h-3V1211h-2V1183h-3V1113h-3V1189h-3V1119h-4V1189h-2V1114h-2V1189h-4V1163h-3V1189h-2V1157h-3V1211h-2V1211h-2V1144h-4V1189h-4V1203h-6V1076h-4V1211h-2V1157h-3V1189h-3V1189h-3V1153h-4V1211h-3V1189h-2V1114h-4V1211h-2V1086h-4V1184h-5V1158h-3V1184h-3V1127h-3V1211h-3V1126h-3V1163h-6V1163h-4V1119h-2V1184h-3V1168h-4V1184h-5V1184h-5V1172h-4V1211h-3V1144h-3V1211h-3V1176h-7V1176h-3V1119h-4V1176h-6V1176h-3V1165h-4V1211h-2V1139h-4V1179h-3V1211h-2V1211h-3V1179h-4V1165h-3V1211h-2V1176h-7V1211h-2V1176h-4V1136h-4V1190h-4V1137h-4V1179h-6V1162h-3V1179h-3V1145h-4V1179h-4V1165h-4V1179h-6V1163h-5V1163h-7V1110h-3V1163h-7V1189h-4V1201h-4V1211h-2V1156h-4V1211h-3V1162h-3V1211h-2V1151h-4V1173h-2V1194h-3V1153h-4V1173h-5V1152h-4V1173h-4V1211h-6V1211h-2V1189h-4V1211h-2V1211h-2V1189h-2V1189h-3V1189h-6V1211h-2V1176h-3V1176h-3V1176h-4V1117h-4V1168h-7V1182h-4V1108h-3V1211h-2V1157h-2V1168h-4V1168h-7V1168h-7V1185h-3V1148h-3V1173h-3V1211h-3V1150h-4V1211h-3V1140h-4V1211h-2V1153h-3V1179h-3V1179h-6V1211h-2V1179h-6V1179h-2V1155h-4V1211h-3V1170h-4V1204h-5V1205h-6V1189h-4V1161h-2V1189h-4V1173h-3V1211h-2V1211h-3V1191h-4V1148h-3V1173h-4V1176h-3V1176h-6V1176h-4V1211h-2V1139h-4V1176h-3V1134h-3V1211h-2V1134h-4V1173h-4V1195h-5V1195h-4V1143h-3V1195h-3V1146h-4V1195h-5V1106h-4V1168h-4V1168h-5V1168h-3V1141h-2V1176h-7V1176h-4V1118h-4V1163h-4V1163h-7V1145h-3V1163h-2V1140h-4V1211h-2V1189h-3V1176h-3V1189h-6V1148h-3V1210h-2V1150h-4V1189h-5V1131h-3V1189h-7V1160h-3V1189h-3V1189h-6V1140h-4V1211h-2V1211h-2V1211h-2V1146h-3V1179h-4V1148h-4V1179h-4V1211h-2V1176h-4V1154h-3V1190h-5V1153h-4V1176h-5V1179h-5V1211h-3V1179h-7V1211h-3V1099h-2V1163h-4V1163h-6V1152h-3V1176h-3V1211h-3V1110h-4V1211h-2V1211h-3V1162h-3V1176h-4V1184h-4V1184h-4V1167h-3V1184h-4V1125h-4V1184h-7V1139h-4V1211h-3V1211h-2V1211h-3V1163h-4V1211h-2V1146h-3V1211h-3V1211h-2V1109h-4V1173h-4V1160h-4V1174h-3V1211h-2V1135h-3V1211h-2V1211h-2V1132h-3V1184h-5V1211h-2V1184h-3V1167h-3V1184h-5V1163h-4V1163h-4V1184h-5V1131h-4V1184h-4V1152h-3V1184h-3V1124h-2V1176h-6V1176h-4V1125h-4V1163h-4V1163h-7V1185h-3V1110h-3V1195h-4V1174h-3V1195h-2V1195h-5V1195h-2V1152h-4V1211h-2V1159h-4V1189h-5V1171h-2V1189h-3V1176h-7V1211h-2V1176h-7V1155h-2V1211h-2V1211h-3V1160h-4V1176h-6V1211h-2V1179h-4V1128h-3V1179h-5V1195h-4V1195h-5V1195h-3V1211h-2V1163h-5V1211h-3V1109h-2V1163h-6V1163h-4V1211h-2V1145h-4V1176h-3V1164h-4V1176h-4V1176h-6V1195h-7V1144h-4V1195h-4V1211h-2V1211h-2V1151h-4V1211h-3V1163h-6V1211h-3V1159h-3V1189h-4V1211h-2V1189h-7V1189h-6V1163h-3V1189h-5V1168h-4V1211h-3V1112h-3V1179h-3V1140h-4V1184h-3V1128h-4V1184h-3V1184h-4V1126h-4V1184h-4V1211h-3V1211h-2V1168h-3V1133h-2V1168h-3V1168h-7V1123h-4V1211h-3V1120h-3V1173h-3V1173h-4V1162h-3V1190h-4V1176h-7V1159h-4V1195h-3V1152h-4V1211h-2V1147h-4V1176h-4V1136h-4V1211h-3V1176h-7V1139h-3V1211h-2V1114h-4V1163h-5V1152h-3V1163h-3V1163h-4V1148h-3V1163h-4V1163h-5V1211h-3V1179h-4V1114h-3V1184h-3V1184h-5V1184h-2V1211h-3V1184h-4V1173h-6V1173h-3V1132h-3V1173h-3V1119h-4V1211h-2V1163h-7V1163h-3V1163h-6V1211h-2V1163h-2V1137h-3V1163h-5V1126h-4V1184h-2V1159h-3V1184h-5V1184h-3V1171h-4V1211h-2V1207h-3V1195h-2V1211h-3V1171h-4V1195h-5V1211h-2V1112h-4V1179h-2V1179h-4V1159h-3V1184h-3V1124h-4V1204h-5V1184h-4V1211h-2V1155h-4V1163h-4V1136h-3V1163h-5V1130h-3V1163h-4V1149h-3V1211h-2V1171h-2V1189h-4V1184h-4V1126h-3V1211h-2V1157h-3V1168h-5V1211h-2V1168h-4V1125h-4V1189h-4V1169h-4V1211h-2V1178h-4V1173h-2V1161h-3V1173h-3V1211h-2V1156h-4V1189h-2V1189h-3V1189h-3V1189h-3V1211h-3V1125h-3V1211h-2V1184h-2V1195h-7V1210h-3V1130h-3V1211h-2V1111h-3V1176h-3V1157h-4V1211h-3V1176h-4V1168h-6V1104h-3V1168h-4V1168h-7V1157h-4V1168h-3V1198h-3V1148h-3V1211h-2V1211h-2V1179h-3V1121h-3V1179h-5V1164h-4V1211h-2V1195h-4V1156h-3V1195h-4V1211h-2V1184h-4V1168h-5V1168h-3V1184h-2V1140h-4V1189h-3V1176h-2V1176h-3V1160h-3V1211h-2V1114h-4V1176h-5V1157h-4V1211h-2V1184h-4V1184h-3V1184h-7V1208h-5V1173h-3V1189h-3V1189h-4V1211h-2V1144h-4V1195h-3V1195h-4V1211h-2V1135h-4V1184h-3V1184h-7V1211h-2V1184h-3V1137h-3V1211h-2V1150h-4V1211h-2V1107h-3V1173h-7V1173h-7V1153h-3V1168h-6V1168h-4V1168h-2V1130h-4V1168h-4V1168h-2V1168h-7V1176h-3V1211h-2V1203h-5V1189h-4V1166h-4V1189h-4V1211h-3V1136h-4V1211h-2Z"/><path d="M857 1497V1227h4V1259h3V1227h6V1224h2V1262h4V1227h5V1227h3V1251h2V1249h3V1249h3V1224h3V1224h3V1313h4V1235h6V1224h3V1261h4V1224h2V1298h4V1224h2V1267h4V1238h4V1224h2V1261h4V1238h5V1240h3V1240h4V1286h4V1240h6V1240h4V1253h3V1232h7V1245h4V1232h5V1232h5V1224h3V1224h2V1224h2V1238h5V1224h3V1257h3V1224h2V1224h3V1265h4V1224h3V1232h6V1224h3V1288h3V1224h3V1224h2V1224h5V1224h3V1224h7V1240h4V1227h6V1227h4V1255h4V1238h4V1263h3V1224h3V1224h3V1238h7V1249h6V1249h3V1249h4V1224h2V1281h4V1249h5V1279h2V1224h2V1224h3V1243h6V1243h4V1293h4V1224h3V1235h4V1235h5V1255h4V1224h3V1246h4V1229h4V1224h3V1229h7V1224h3V1258h4V1249h5V1249h4V1249h5V1260h4V1249h6V1285h3V1249h2V1267h4V1224h3V1249h5V1283h4V1238h7V1238h4V1224h2V1278h4V1232h6V1253h4V1232h6V1266h4V1224h3V1258h4V1235h5V1241h4V1229h5V1224h2V1269h3V1229h4V1229h4V1229h6V1229h5V1229h7V1229h4V1229h4V1229h2V1229h3V1224h2V1224h3V1306h3V1249h7V1249h6V1224h2V1249h7V1249h5V1249h3V1314h2V1249h3V1291h4V1249h3V1274h4V1232h4V1273h2V1232h4V1224h3V1240h6V1240h3V1240h5V1282h3V1227h3V1224h2V1227h5V1227h5V1266h4V1227h3V1270h3V1224h2V1295h3V1224h3V1293h3V1224h3V1298h4V1238h6V1252h3V1238h4V1274h4V1238h5V1238h3V1224h2V1229h6V1260h3V1229h7V1229h5V1229h3V1224h3V1241h4V1224h3V1284h2V1224h4V1241h4V1224h3V1254h4V1240h5V1224h3V1240h4V1224h3V1242h3V1249h7V1307h4V1249h7V1249h4V1249h2V1267h2V1240h5V1224h2V1252h4V1240h5V1264h4V1224h5V1224h2V1238h4V1224h2V1285h3V1224h5V1224h3V1274h4V1224h5V1252h3V1240h5V1285h3V1240h5V1281h4V1224h3V1240h4V1293h3V1224h2V1232h4V1232h3V1247h4V1224h2V1238h4V1238h2V1238h4V1224h2V1238h4V1238h5V1238h4V1288h3V1224h2V1302h4V1238h4V1258h3V1224h3V1268h4V1224h5V1253h4V1224h4V1277h3V1224h5V1268h4V1224h4V1224h3V1295h4V1235h3V1235h4V1235h4V1264h4V1229h5V1308h3V1243h3V1235h5V1267h3V1235h2V1224h2V1229h7V1229h6V1229h4V1229h5V1248h3V1224h3V1253h3V1224h2V1232h5V1232h2V1224h3V1262h3V1227h3V1224h2V1272h4V1227h3V1227h5V1224h2V1243h3V1270h2V1243h4V1224h3V1280h3V1224h3V1243h5V1232h2V1246h3V1232h3V1232h2V1232h5V1275h4V1232h3V1243h4V1224h3V1249h4V1224h2V1224h3V1224h5V1289h3V1224h3V1255h3V1224h7V1227h4V1259h4V1227h2V1227h5V1262h3V1224h3V1227h2V1224h3V1277h4V1229h4V1242h4V1224h2V1245h4V1224h3V1260h3V1224h2V1265h3V1224h3V1284h2V1232h3V1232h3V1232h4V1243h4V1243h4V1224h2V1277h3V1224h3V1224h3V1278h4V1227h6V1248h4V1224h2V1229h4V1242h4V1224h3V1294h3V1229h5V1229h4V1267h3V1224h3V1229h7V1229h5V1269h4V1232h4V1232h4V1232h4V1224h3V1296h4V1224h3V1224h2V1270h3V1227h2V1224h3V1274h3V1232h3V1262h2V1238h7V1224h2V1238h5V1224h3V1224h3V1313h3V1249h2V1249h7V1275h3V1249h5V1264h3V1249h2V1224h2V1240h7V1271h4V1240h7V1304h4V1224h3V1240h4V1247h3V1227h4V1224h3V1229h5V1272h3V1224h3V1229h6V1227h4V1224h2V1239h2V1227h4V1227h5V1227h5V1302h3V1240h6V1263h4V1243h7V1243h6V1287h4V1243h4V1243h2V1263h3V1249h4V1280h4V1249h3V1308h2V1229h6V1245h3V1229h5V1273h2V1229h2V1224h3V1303h4V1224h2V1249h3V1263h4V1232h3V1253h4V1232h6V1232h7V1272h4V1224h3V1250h4V1232h5V1232h4V1224h3V1232h4V1232h5V1232h4V1232h6V1243h3V1238h4V1238h5V1276h3V1224h3V1238h3V1224h2V1284h3V1235h5V1224h3V1235h4V1271h4V1224h2V1240h3V1251h3V1240h4V1240h6V1272h4V1249h5V1249h3V1249h5V1307h4V1224h3V1224h3V1224h6V1224h3V1224h4V1224h3V1224h2V1279h4V1238h5V1298h3V1238h5V1224h3V1298h4V1238h6V1251h3V1229h2V1229h6V1224h3V1229h2V1224h3V1229h4V1245h3V1229h4V1224h2V1229h4V1240h3V1287h3V1240h6V1235h4V1235h5V1224h3V1283h4V1224h3V1301h3V1224h2V1304h3V1224h2V1240h7V1332h3V1224h2V1286h3V1240h4V1378h3V1224h3V1224h2V1235h4V1303h4V1235h6V1346h3V1224h2V1339h4V1224h2V1299h4V1224h3V1307h4V1238h3V1338h4V1224h2V1325h2V1224h3V1224h7V1285h4V1235h5V1324h3V1235h2V1370h4V1224h3V1269h3V1235h4V1348h3V1240h3V1392h4V1240h3V1240h7V1227h5V1323h4V1229h2V1331h4V1224h2V1351h4V1224h3V1332h3V1227h7V1351h4V1227h4V1227h2V1261h3V1224h2V1316h3V1240h2V1353h3V1240h4V1281h4V1240h4V1285h4V1224h6V1224h4V1262h4V1224h3V1320h4V1224h5V1224h3V1302h2V1224h4V1356h3V1224h3V1397h4V1224h3V1398h3V1249h6V1269h4V1224h2V1382h4V1249h7V1337h3V1249h6V1249h2V1403h3V1232h4V1290h3V1232h4V1232h3V1287h3V1232h7V1261h4V1224h3V1232h6V1232h6V1268h4V1224h3V1266h4V1243h5V1255h4V1224h3V1255h4V1224h3V1229h7V1229h4V1240h4V1229h6V1256h3V1224h3V1235h3V1235h7V1281h4V1235h7V1270h4V1224h2V1232h2V1243h3V1229h2V1280h3V1229h7V1280h4V1224h3V1227h3V1249h5V1262h3V1249h4V1224h3V1269h4V1240h5V1297h4V1240h4V1240h4V1240h4V1243h2V1243h2V1243h2V1232h4V1276h2V1224h3V1266h4V1232h5V1284h3V1224h3V1249h4V1249h5V1224h2V1286h4V1235h3V1264h4V1224h3V1240h3V1224h2V1240h5V1270h4V1240h4V1240h6V1267h4V1224h4V1241h4V1224h7V1264h3V1227h6V1227h4V1227h2V1264h4V1227h5V1227h6V1266h3V1224h2V1235h2V1264h4V1235h4V1297h4V1224h2V1280h3V1238h6V1319h2V1227h7V1227h3V1224h3V1245h4V1243h2V1288h4V1243h6V1243h4V1243h3V1254h4V1224h2V1224h3V1260h3V1249h7V1301h3V1224h3V1224h3V1260h3V1229h4V1269h2V1229h2V1229h5V1229h2V1235h5V1235h2V1276h4V1235h3V1263h2V1235h3V1224h3V1224h3V1252h3V1238h3V1227h5V1227h4V1280h4V1224h3V1227h5V1227h4V1227h2V1268h3V1227h5V1251h3V1227h5V1264h3V1224h2V1266h4V1235h5V1235h7V1229h5V1229h3V1232h7V1290h3V1224h3V1253h3V1232h7V1224h2V1232h5V1308h4V1224h2V1249h4V1249h5V1224h2V1224h2V1249h2V1235h4V1235h7V1235h6V1240h3V1240h6V1302h4V1240h3V1240h4V1224h3V1240h7V1275h3V1240h5V1240h5V1240h7V1281h3V1227h2V1227h3V1227h2V1239h4V1227h5V1275h3V1227h4V1239h3V1227h3V1278h4V1224h3V1262h4V1224h3V1287h3V1224h2V1249h5V1249h5V1247h4V1235h4V1315h3V1235h4V1235h5V1235h5V1227h4V1227h4V1227h4V1265h4V1227h6V1229h3V1280h2V1229h2V1229h5V1263h4V1243h4V1224h3V1277h4V1235h3V1235h7V1224h2V1245h4V1232h2V1232h4V1224h2V1243h3V1224h3V1232h3V1243h7V1259h3V1227h5V1267h4V1227h3V1238h2V1224h3V1243h4V1224h2V1309h4V1243h3V1224h2V1264h4V1224h3V1235h4V1292h4V1235h4V1235h5V1235h4V1232h7V1224h2V1281h4V1224h3V1232h3V1235h6V1235h5V1258h3V1235h3V1272h4V1235h3V1224h2V1249h3V1232h4V1232h4V1232h5V1232h3V1232h2V1272h4V1238h5V1238h4V1224h3V1238h5V1238h2V1238h4V1277h2V1240h3V1240h7V1240h7V1240h4V1240h5V1240h2V1224h3V1235h6V1235h4V1270h4V1224h5V1224h5V1250h4V1224h2V1264h4V1224h2V1302h4V1224h3V1273h4V1224h2V1249h6V1240h6V1289h4V1240h4V1264h4V1240h2V1240h5V1224h3V1240h7V1256h4V1240h3V1240h6V1240h7V1229h4V1229h4V1288h4V1224h3V1229h5V1255h4V1240h6V1240h4V1240h4V1240h3V1224h7V1224h2V1224h3V1260h4V1227h5V1244h4V1227h2V1243h2V1224h2V1243h3V1309h4V1243h7V1243h4V1224h2V1280h2V1224h3V1224h3V1235h5V1235h4V1263h2V1224h3V1235h3V1235h3V1224h3V1246h4V1235h5V1235h6V1235h4V1224h3V1285h3V1224h3V1224h5V1299h4V1224h2V1224h3V1224h2V1263h4V1224h2V1229h4V1254h3V1224h3V1229h6V1245h4V1229h5V1267h4V1227h6V1264h1V1497V1657h-1V1724h-6V1703h-4V1724h-5V1724h-4V1746h-6V1712h-3V1746h-3V1696h-4V1774h-2V1746h-4V1688h-2V1774h-3V1730h-2V1699h-4V1730h-5V1738h-3V1774h-3V1738h-3V1726h-4V1738h-6V1738h-5V1730h-4V1661h-3V1774h-3V1682h-3V1741h-3V1774h-2V1692h-4V1753h-5V1730h-3V1730h-3V1774h-2V1730h-2V1671h-4V1730h-7V1730h-4V1774h-3V1701h-2V1774h-2V1774h-2V1730h-4V1748h-5V1670h-4V1742h-3V1774h-2V1724h-7V1690h-3V1724h-4V1739h-4V1752h-6V1752h-4V1752h-5V1696h-3V1741h-4V1741h-4V1724h-4V1724h-7V1724h-6V1774h-3V1758h-4V1735h-7V1701h-3V1735h-5V1774h-2V1735h-4V1684h-4V1760h-4V1746h-6V1746h-6V1746h-2V1746h-4V1746h-3V1730h-4V1676h-2V1730h-4V1718h-2V1730h-4V1730h-5V1730h-5V1676h-4V1757h-4V1757h-6V1744h-3V1774h-2V1757h-5V1699h-4V1746h-7V1738h-7V1713h-3V1774h-2V1697h-4V1774h-2V1770h-5V1752h-3V1732h-4V1752h-5V1737h-4V1774h-2V1740h-3V1746h-5V1730h-4V1695h-4V1730h-3V1741h-2V1677h-3V1730h-4V1702h-3V1730h-3V1757h-5V1757h-6V1741h-3V1757h-3V1729h-4V1774h-2V1757h-7V1710h-4V1724h-5V1671h-4V1724h-4V1724h-4V1724h-3V1724h-4V1735h-2V1681h-3V1735h-4V1689h-2V1735h-4V1724h-3V1774h-2V1697h-3V1741h-4V1758h-5V1741h-3V1757h-7V1774h-3V1718h-3V1730h-3V1774h-2V1714h-4V1774h-2V1718h-4V1730h-2V1746h-7V1774h-3V1708h-4V1741h-3V1721h-4V1741h-4V1741h-5V1774h-2V1774h-2V1774h-3V1746h-6V1746h-4V1730h-4V1746h-4V1746h-4V1758h-5V1746h-5V1693h-4V1724h-3V1713h-4V1724h-4V1724h-5V1724h-5V1713h-2V1724h-3V1757h-3V1757h-4V1757h-3V1724h-4V1710h-3V1774h-3V1724h-4V1709h-3V1724h-5V1724h-4V1774h-2V1720h-3V1774h-2V1707h-3V1730h-7V1730h-5V1751h-5V1661h-3V1730h-7V1730h-3V1713h-4V1774h-3V1724h-4V1724h-6V1774h-3V1724h-6V1752h-7V1716h-4V1774h-2V1688h-2V1752h-2V1724h-5V1684h-4V1752h-2V1752h-4V1752h-5V1737h-2V1752h-7V1752h-3V1700h-3V1774h-3V1724h-7V1684h-3V1724h-5V1724h-7V1724h-5V1730h-4V1774h-2V1713h-3V1741h-5V1713h-3V1741h-5V1741h-3V1774h-2V1757h-4V1769h-5V1757h-3V1757h-4V1696h-4V1735h-5V1668h-3V1735h-3V1710h-3V1735h-3V1723h-3V1774h-2V1774h-3V1752h-4V1774h-2V1757h-5V1774h-2V1757h-5V1774h-2V1774h-2V1722h-4V1774h-3V1746h-3V1774h-3V1722h-3V1757h-7V1724h-3V1774h-3V1774h-2V1724h-4V1774h-3V1675h-4V1724h-6V1743h-4V1774h-2V1713h-4V1735h-3V1723h-3V1735h-7V1774h-2V1757h-6V1689h-3V1774h-2V1724h-4V1724h-4V1677h-4V1774h-2V1688h-2V1746h-3V1769h-6V1735h-5V1735h-4V1774h-2V1724h-4V1735h-6V1724h-3V1735h-7V1735h-4V1737h-4V1752h-4V1752h-6V1705h-4V1752h-4V1768h-5V1752h-2V1774h-3V1774h-3V1752h-4V1731h-3V1752h-4V1724h-2V1735h-5V1735h-4V1735h-3V1719h-3V1735h-5V1735h-4V1719h-3V1774h-2V1750h-4V1774h-2V1774h-2V1774h-2V1724h-4V1738h-4V1689h-4V1738h-4V1738h-5V1738h-4V1724h-3V1698h-4V1724h-3V1724h-5V1660h-3V1724h-3V1709h-4V1741h-7V1720h-3V1774h-2V1680h-3V1774h-2V1738h-2V1724h-4V1735h-7V1679h-4V1735h-7V1722h-3V1735h-3V1735h-3V1735h-6V1735h-4V1735h-4V1758h-7V1735h-3V1687h-4V1735h-3V1696h-4V1752h-5V1770h-4V1726h-3V1768h-4V1752h-6V1752h-6V1752h-3V1641h-4V1752h-7V1703h-3V1774h-3V1676h-4V1746h-3V1655h-4V1746h-3V1774h-2V1746h-6V1774h-3V1757h-7V1624h-4V1757h-2V1617h-4V1757h-6V1713h-3V1724h-3V1665h-4V1724h-3V1774h-3V1724h-4V1774h-2V1610h-3V1724h-5V1724h-4V1624h-3V1746h-4V1665h-4V1741h-6V1683h-4V1741h-4V1643h-4V1741h-4V1663h-3V1774h-2V1654h-3V1774h-2V1640h-3V1774h-2V1711h-4V1738h-4V1738h-7V1688h-3V1752h-3V1641h-4V1774h-2V1696h-4V1774h-2V1702h-4V1752h-5V1752h-7V1774h-3V1636h-4V1774h-3V1735h-3V1656h-4V1735h-3V1613h-3V1735h-4V1774h-2V1706h-3V1735h-5V1646h-4V1738h-7V1632h-3V1774h-2V1774h-2V1645h-4V1774h-3V1589h-4V1748h-3V1582h-4V1737h-2V1682h-4V1724h-2V1663h-3V1724h-6V1612h-4V1764h-4V1682h-2V1746h-3V1625h-3V1757h-4V1626h-3V1774h-2V1757h-3V1757h-7V1678h-2V1757h-3V1774h-2V1730h-3V1668h-3V1746h-4V1691h-3V1730h-5V1693h-4V1730h-6V1667h-3V1774h-3V1745h-4V1774h-2V1709h-4V1735h-3V1673h-4V1735h-3V1774h-2V1722h-3V1752h-6V1774h-2V1752h-3V1741h-6V1689h-4V1752h-3V1738h-5V1713h-3V1738h-5V1723h-4V1738h-2V1762h-3V1704h-4V1757h-3V1757h-6V1711h-3V1757h-3V1774h-4V1757h-5V1667h-3V1730h-5V1670h-4V1730h-6V1681h-4V1759h-3V1723h-3V1724h-2V1711h-4V1738h-4V1691h-3V1738h-5V1774h-3V1738h-2V1693h-3V1752h-3V1741h-3V1752h-5V1741h-4V1752h-3V1752h-6V1739h-4V1752h-5V1705h-4V1752h-3V1752h-4V1752h-5V1752h-4V1752h-3V1752h-4V1752h-7V1730h-6V1751h-4V1701h-3V1730h-4V1707h-3V1738h-2V1741h-4V1741h-3V1774h-2V1774h-2V1741h-5V1726h-3V1757h-6V1774h-2V1692h-3V1757h-4V1745h-4V1757h-3V1774h-2V1713h-4V1735h-4V1735h-6V1735h-7V1735h-4V1735h-6V1694h-3V1735h-5V1744h-5V1701h-4V1774h-2V1774h-2V1734h-4V1746h-6V1684h-3V1746h-3V1746h-5V1774h-3V1723h-4V1741h-3V1709h-4V1741h-3V1715h-4V1741h-7V1757h-4V1770h-7V1738h-2V1774h-2V1752h-3V1752h-5V1737h-3V1752h-7V1774h-2V1700h-3V1760h-3V1724h-3V1746h-5V1742h-2V1724h-7V1774h-2V1707h-3V1724h-3V1671h-3V1774h-2V1730h-3V1707h-2V1738h-3V1738h-4V1738h-3V1722h-4V1738h-4V1720h-4V1746h-4V1746h-5V1746h-7V1682h-3V1759h-3V1708h-4V1746h-5V1746h-3V1737h-3V1713h-4V1724h-4V1724h-2V1773h-4V1752h-6V1752h-4V1695h-3V1774h-3V1722h-3V1752h-2V1752h-4V1746h-4V1746h-4V1774h-3V1683h-3V1774h-2V1678h-3V1746h-3V1715h-2V1730h-3V1730h-3V1730h-4V1774h-2V1730h-4V1707h-4V1752h-4V1738h-3V1774h-2V1738h-3V1724h-3V1738h-5V1774h-2V1738h-4V1674h-4V1738h-7V1727h-3V1735h-3V1694h-3V1735h-5V1721h-3V1774h-2V1735h-4V1717h-3V1754h-4V1774h-3V1715h-4V1735h-5V1774h-2V1691h-3V1735h-3V1774h-2V1741h-5V1719h-3V1741h-3V1675h-3V1741h-4V1774h-2V1666h-3V1724h-2V1724h-5V1664h-3V1724h-4V1724h-2V1774h-3V1774h-3V1774h-3V1774h-2V1752h-5V1774h-2V1735h-3V1730h-3V1686h-3V1742h-5V1698h-4V1730h-6V1741h-7V1689h-2V1774h-2V1729h-3V1741h-5V1774h-3V1710h-3V1747h-5V1714h-4V1735h-4V1721h-4V1774h-3V1735h-4V1735h-3V1700h-4V1741h-4V1741h-5V1741h-3V1688h-4V1741h-4V1741h-5V1741h-4V1730h-3V1686h-3V1730h-4V1673h-4V1744h-2V1730h-3V1752h-4V1730h-5V1689h-4V1730h-2V1693h-4V1774h-2V1741h-4V1741h-2V1730h-4V1672h-3V1750h-4V1681h-2V1774h-3V1717h-4V1738h-3V1730h-4V1730h-5V1706h-3V1724h-5V1685h-3V1724h-5V1724h-4V1673h-3V1724h-5V1774h-3V1703h-2V1738h-4V1774h-2V1738h-5V1717h-4V1738h-5V1738h-4V1721h-2V1757h-5V1774h-2V1774h-2V1715h-4V1757h-7V1746h-4V1757h-7V1725h-3V1755h-3V1711h-4V1741h-3V1741h-5V1694h-4V1741h-3V1752h-4V1741h-4V1774h-2V1740h-3V1752h-4V1715h-3V1774h-3V1752h-5V1752h-7V1752h-3V1752h-6V1771h-2V1719h-3V1752h-5V1735h-4V1723h-4V1774h-3V1735h-6V1722h-4V1738h-3V1738h-3V1738h-3V1724h-3V1774h-2V1752h-3V1774h-3V1720h-4V1752h-5V1752h-5V1730h-2V1679h-3V1730h-3V1752h-5V1716h-3V1730h-6V1774h-3V1730h-4V1774h-2V1695h-4V1738h-4V1676h-3V1738h-4V1726h-3V1774h-2V1724h-3V1757h-5V1757h-7V1705h-2V1757h-6V1757h-7V1757h-3V1729h-3V1746h-2V1699h-3V1774h-2V1746h-4V1746h-4V1746h-7V1746h-5V1746h-6V1719h-4V1748h-4V1701h-3V1774h-2V1746h-5V1694h-4V1762h-5V1746h-4V1738h-3V1683h-4V1738h-6V1738h-4V1738h-6V1727h-4V1741h-2V1690h-4V1730h-7V1730h-4V1730h-5V1730h-3V1730h-4V1774h-2V1730h-3V1774h-6V1745h-4V1757h-5V1709h-4V1757h-5V1735h-4V1735h-3V1735h-7V1759h-3V1752h-4V1735h-4V1738h-3V1656h-4V1724h-5V1724h-4V1724h-3V1724h-4V1700h-4V1757h-6V1757h-3V1689h-2V1774h-2V1738h-5V1738h-4V1774h-2V1722h-4V1774h-3V1730h-6V1730h-7V1730h-3V1710h-3V1730h-3V1666h-4V1730h-4V1689h-4V1757h-6V1757h-4V1757h-7V1722h-3V1757h-5V1774h-2V1723h-3V1774h-3V1757h-3V1757h-6V1757h-3V1688h-4V1774h-3V1757h-2V1774h-3V1738h-3V1752h-5V1774h-2V1752h-2V1697h-3V1724h-5V1724h-5V1693h-4V1730h-7V1730h-3V1690h-4V1730h-6V1707h-4V1724h-4V1774h-3V1757h-5V1734h-4V1774h-2V1718h-4V1757h-4V1725h-2V1757h-4V1736h-2V1738h-4V1716h-3V1738h-6V1730h-4V1679h-3V1730h-3V1718h-3V1774h-3V1774h-2V1718h-3V1730h-5V1769h-4V1774h-2V1757h-6V1757h-3V1718h-4Z"/></g><g fill="#696fd2"><path d="M816 926 L818 924 L821 934 L826 928 L831 912 L836 900 L839 912 L843 916 L848 909 L853 904 L858 902 V1002 L853 970 L850 994 L847 1022 L845 982 L841 964 L838 1000 L835 972 L831 980 L826 960 L822 964 L819 1002 L817 1028 L816 1028 Z"/><path d="M816 1481 L818 1479 L821 1489 L826 1483 L831 1467 L836 1455 L839 1467 L843 1471 L848 1464 L853 1459 L858 1457 V1557 L853 1525 L850 1549 L847 1577 L845 1537 L841 1519 L838 1555 L835 1527 L831 1535 L826 1515 L822 1519 L819 1557 L817 1583 L816 1583 Z"/></g></svg>
<div style="left:816px;top:596px;width:3431px;height:11px;background:#000;"></div>
<div style="left:808px;top:596px;width:8px;height:1183px;background:#000;"></div>
<div style="left:624px;top:596px;width:5px;height:1183px;background:#000;"></div>
<div style="left:4248px;top:596px;width:4.5px;height:1183px;background:#000;"></div>
<div style="left:20px;top:1775px;width:4232.5px;height:4px;background:#000;"></div>
<svg style="left:54px;top:630px;" width="40" height="36" viewBox="0 0 40 36"><path d="M3 3 L34 33 M34 3 L3 33" stroke="#111" stroke-width="3.6" stroke-linecap="round"/></svg>
<div style="left:123px;top:622px;font-size:48px;line-height:48px;white-space:nowrap;color:#111;letter-spacing:2px;-webkit-text-stroke:0.5px #111;">夜曲<span style="margin:0 2px">–</span>周杰伦</div>
<svg style="left:486px;top:638px;" width="38" height="22" viewBox="0 0 38 22"><path d="M2 19 L18 3 L34 19" fill="none" stroke="#111" stroke-width="3.6" stroke-linecap="round" stroke-linejoin="round"/></svg>
<svg style="left:552px;top:643px;" width="50" height="10" viewBox="0 0 50 10"><circle cx="5" cy="5" r="3.4" fill="#111"/><circle cx="24" cy="5" r="3.4" fill="#111"/><circle cx="43" cy="5" r="3.4" fill="#111"/></svg>
<div style="left:41px;top:690px;width:273px;height:69px;background:#cdd5e4;border-radius:5px;"></div>
<div style="left:333px;top:690px;width:273px;height:69px;background:#cdd5e4;border-radius:5px;"></div>
<div style="left:41px;top:776px;width:565px;height:87px;background:#cdd5e4;border-radius:5px;"></div>
<div style="left:41px;top:701px;font-size:49px;line-height:49px;white-space:nowrap;width:273px;text-align:center;color:#111;letter-spacing:3px;text-indent:3px;-webkit-text-stroke:1px #111;">静音</div>
<div style="left:333px;top:701px;font-size:49px;line-height:49px;white-space:nowrap;width:273px;text-align:center;color:#111;letter-spacing:3px;text-indent:3px;-webkit-text-stroke:1px #111;">独奏</div>
<div style="left:41px;top:793px;font-size:50px;line-height:50px;white-space:nowrap;width:565px;text-align:center;color:#111;letter-spacing:3px;text-indent:3px;-webkit-text-stroke:1px #111;">效果器</div>
<div style="left:65px;top:888px;width:20px;height:4px;background:#111;border-radius:2px;"></div>
<svg style="left:556px;top:879px;" width="22" height="22" viewBox="0 0 22 22"><path d="M2 11 H20 M11 2 V20" stroke="#111" stroke-width="3.6" stroke-linecap="round"/></svg>
<div style="left:65px;top:930px;width:521px;height:3px;background:#9aa0ac;"></div>
<svg style="left:297px;top:901px;" width="54" height="54" viewBox="0 0 54 54"><circle cx="27" cy="26" r="21.5" fill="#fff" stroke="#111" stroke-width="4.2"/></svg>
<div style="left:65px;top:988px;font-size:32px;line-height:32px;white-space:nowrap;color:#111;font-weight:500;">左</div>
<div style="left:541px;top:988px;font-size:32px;line-height:32px;white-space:nowrap;color:#111;font-weight:500;">右</div>
<div style="left:65px;top:1050px;width:521px;height:3px;background:#9aa0ac;"></div>
<svg style="left:297px;top:1021px;" width="54" height="54" viewBox="0 0 54 54"><circle cx="27" cy="26" r="21.5" fill="#fff" stroke="#111" stroke-width="4.2"/></svg>
<div style="left:680.0px;top:674.5px;font-size:63px;line-height:63px;white-space:nowrap;font-family:'Liberation Serif',serif;font-weight:bold;color:#000;"><span class="cell" style="width:35.5px;text-align:center;">1</span><span class="cell" style="width:35.5px;text-align:left;padding-left:4px;">.</span><span class="cell" style="width:35.5px;text-align:center;">0</span></div>
<div style="left:688.1px;top:778.5px;font-size:63px;line-height:63px;white-space:nowrap;font-family:'Liberation Serif',serif;font-weight:normal;color:#000;"><span class="cell" style="width:32.8px;text-align:center;">0</span><span class="cell" style="width:32.8px;text-align:left;padding-left:4px;">.</span><span class="cell" style="width:32.8px;text-align:center;">5</span></div>
<div style="left:680.0px;top:915.5px;font-size:63px;line-height:63px;white-space:nowrap;font-family:'Liberation Serif',serif;font-weight:bold;color:#000;"><span class="cell" style="width:35.5px;text-align:center;">0</span><span class="cell" style="width:35.5px;text-align:left;padding-left:4px;">.</span><span class="cell" style="width:35.5px;text-align:center;">0</span></div>
<div style="left:658.1px;top:1046.5px;font-size:63px;line-height:63px;white-space:nowrap;font-family:'Liberation Serif',serif;font-weight:normal;color:#000;"><span class="cell" style="width:30px;"><span style="display:inline-block;transform:scaleX(0.7);">−</span></span><span class="cell" style="width:32.8px;text-align:center;">0</span><span class="cell" style="width:32.8px;text-align:left;padding-left:4px;">.</span><span class="cell" style="width:32.8px;text-align:center;">5</span></div>
<div style="left:646.0px;top:1151.5px;font-size:63px;line-height:63px;white-space:nowrap;font-family:'Liberation Serif',serif;font-weight:bold;color:#000;"><span class="cell" style="width:34px;"><span style="display:inline-block;transform:scaleX(0.86);">−</span></span><span class="cell" style="width:35.5px;text-align:center;">1</span><span class="cell" style="width:35.5px;text-align:left;padding-left:4px;">.</span><span class="cell" style="width:35.5px;text-align:center;">0</span></div>
<div style="left:797px;top:807px;width:11px;height:4px;background:#000;"></div>
<div style="left:787px;top:940px;width:21px;height:4px;background:#000;"></div>
<div style="left:797px;top:1076px;width:11px;height:4px;background:#000;"></div>
<div style="left:680.0px;top:1223.5px;font-size:63px;line-height:63px;white-space:nowrap;font-family:'Liberation Serif',serif;font-weight:bold;color:#000;"><span class="cell" style="width:35.5px;text-align:center;">1</span><span class="cell" style="width:35.5px;text-align:left;padding-left:4px;">.</span><span class="cell" style="width:35.5px;text-align:center;">0</span></div>
<div style="left:688.1px;top:1331.5px;font-size:63px;line-height:63px;white-space:nowrap;font-family:'Liberation Serif',serif;font-weight:normal;color:#000;"><span class="cell" style="width:32.8px;text-align:center;">0</span><span class="cell" style="width:32.8px;text-align:left;padding-left:4px;">.</span><span class="cell" style="width:32.8px;text-align:center;">5</span></div>
<div style="left:680.0px;top:1466.5px;font-size:63px;line-height:63px;white-space:nowrap;font-family:'Liberation Serif',serif;font-weight:bold;color:#000;"><span class="cell" style="width:35.5px;text-align:center;">0</span><span class="cell" style="width:35.5px;text-align:left;padding-left:4px;">.</span><span class="cell" style="width:35.5px;text-align:center;">0</span></div>
<div style="left:658.1px;top:1606.5px;font-size:63px;line-height:63px;white-space:nowrap;font-family:'Liberation Serif',serif;font-weight:normal;color:#000;"><span class="cell" style="width:30px;"><span style="display:inline-block;transform:scaleX(0.7);">−</span></span><span class="cell" style="width:32.8px;text-align:center;">0</span><span class="cell" style="width:32.8px;text-align:left;padding-left:4px;">.</span><span class="cell" style="width:32.8px;text-align:center;">5</span></div>
<div style="left:646.0px;top:1710.5px;font-size:63px;line-height:63px;white-space:nowrap;font-family:'Liberation Serif',serif;font-weight:bold;color:#000;"><span class="cell" style="width:34px;"><span style="display:inline-block;transform:scaleX(0.86);">−</span></span><span class="cell" style="width:35.5px;text-align:center;">1</span><span class="cell" style="width:35.5px;text-align:left;padding-left:4px;">.</span><span class="cell" style="width:35.5px;text-align:center;">0</span></div>
<div style="left:797px;top:1360px;width:11px;height:4px;background:#000;"></div>
<div style="left:787px;top:1495px;width:21px;height:4px;background:#000;"></div>
<div style="left:797px;top:1635px;width:11px;height:4px;background:#000;"></div>
<div style="left:789px;top:1771px;width:19px;height:4px;background:#000;"></div>
<div style="left:4266px;top:579px;width:70px;height:1552px;background:#f1f1f1;"></div>
<div style="left:4272px;top:644.5px;width:64.5px;height:1415.5px;background:linear-gradient(90deg,#d2d2d2,#c8c8c8 60%,#cfcfcf);"></div>
<svg style="left:4287px;top:603px;" width="30" height="26" viewBox="0 0 30 26"><path d="M4 21 L15 6.5 L26 21" fill="none" stroke="#222" stroke-width="6.5" stroke-linecap="round" stroke-linejoin="miter"/></svg>
<svg style="left:4287px;top:2087px;" width="30" height="26" viewBox="0 0 30 26"><path d="M4 5 L15 19.5 L26 5" fill="none" stroke="#222" stroke-width="6.5" stroke-linecap="round" stroke-linejoin="miter"/></svg>
<div style="left:837px;top:2136px;width:2618px;height:61px;background:linear-gradient(180deg,#cfcfcf,#d6d6d6 50%,#cdcdcd);"></div>
<svg style="left:789px;top:2151px;" width="24" height="30" viewBox="0 0 24 30"><path d="M19 3 L5 14.5 L19 26" fill="none" stroke="#222" stroke-width="5.5" stroke-linecap="round" stroke-linejoin="round"/></svg>
<svg style="left:4225px;top:2151px;" width="24" height="30" viewBox="0 0 24 30"><path d="M5 3 L19 14.5 L5 26" fill="none" stroke="#222" stroke-width="5.5" stroke-linecap="round" stroke-linejoin="round"/></svg>
<div style="left:0px;top:2457px;width:4340px;height:2px;background:#dadada;"></div>
<div style="left:0px;top:2587px;width:4340px;height:2px;background:#d0d0d0;"></div>
<svg style="left:17px;top:2302px;" width="26" height="46" viewBox="0 0 26 46"><rect x="0" y="0" width="6" height="6" rx="1.5" fill="#5a5d70"/><rect x="19" y="0" width="6" height="6" rx="1.5" fill="#5a5d70"/><rect x="0" y="19" width="6" height="6" rx="1.5" fill="#5a5d70"/><rect x="19" y="19" width="6" height="6" rx="1.5" fill="#5a5d70"/><rect x="0" y="38" width="6" height="6" rx="1.5" fill="#5a5d70"/><rect x="19" y="38" width="6" height="6" rx="1.5" fill="#5a5d70"/></svg>
<div style="left:71px;top:2245px;font-size:48px;line-height:48px;white-space:nowrap;color:#111;">速度</div>
<div style="left:336px;top:2245px;font-size:48px;line-height:48px;white-space:nowrap;color:#111;">拍号</div>
<div style="left:73px;top:2313px;width:170px;height:98px;background:#fff;border:2.5px solid #111;"></div>
<div style="left:94px;top:2334px;font-size:48px;line-height:48px;white-space:nowrap;color:#111;">120</div>
<div style="left:337px;top:2313px;width:130px;height:98px;background:#fff;border:2.5px solid #111;"></div>
<div style="left:356px;top:2334px;font-size:48px;line-height:48px;white-space:nowrap;color:#111;">4</div>
<div style="left:250px;top:2317px;width:57px;height:41px;background:#e3e3e3;border:1.5px solid #b5b5b5;"></div>
<div style="left:250px;top:2366px;width:57px;height:41px;background:#e3e3e3;border:1.5px solid #b5b5b5;"></div>
<svg style="left:250px;top:2317px;" width="57" height="41" viewBox="0 0 57 41"><path d="M18 26 L28.5 15 L39 26 Z" fill="#111"/></svg>
<svg style="left:250px;top:2366px;" width="57" height="41" viewBox="0 0 57 41"><path d="M18 15 L28.5 26 L39 15 Z" fill="#111"/></svg>
<div style="left:474px;top:2317px;width:57px;height:41px;background:#e3e3e3;border:1.5px solid #b5b5b5;"></div>
<div style="left:474px;top:2366px;width:57px;height:41px;background:#e3e3e3;border:1.5px solid #b5b5b5;"></div>
<svg style="left:474px;top:2317px;" width="57" height="41" viewBox="0 0 57 41"><path d="M18 26 L28.5 15 L39 26 Z" fill="#111"/></svg>
<svg style="left:474px;top:2366px;" width="57" height="41" viewBox="0 0 57 41"><path d="M18 15 L28.5 26 L39 15 Z" fill="#111"/></svg>
<svg style="left:558px;top:2330px;" width="36" height="66" viewBox="0 0 36 66"><path d="M30 4 Q20 30 5 60" fill="none" stroke="#111" stroke-width="3.4" stroke-linecap="round"/></svg>
<div style="left:613px;top:2313px;width:198px;height:98px;background:#e1e1e1;border:1.5px solid #9a9a9a;"></div>
<div style="left:627px;top:2336px;font-size:49px;line-height:49px;white-space:nowrap;color:#111;">4</div>
<svg style="left:756px;top:2350px;" width="42" height="26" viewBox="0 0 42 26"><path d="M4 5 L20 21 L36 5" fill="none" stroke="#111" stroke-width="3.2" stroke-linecap="round" stroke-linejoin="round"/></svg>
<svg style="left:866px;top:2302px;" width="26" height="46" viewBox="0 0 26 46"><rect x="0" y="0" width="6" height="6" rx="1.5" fill="#5a5d70"/><rect x="19" y="0" width="6" height="6" rx="1.5" fill="#5a5d70"/><rect x="0" y="19" width="6" height="6" rx="1.5" fill="#5a5d70"/><rect x="19" y="19" width="6" height="6" rx="1.5" fill="#5a5d70"/><rect x="0" y="38" width="6" height="6" rx="1.5" fill="#5a5d70"/><rect x="19" y="38" width="6" height="6" rx="1.5" fill="#5a5d70"/></svg>
<div style="left:920px;top:2240px;width:52px;height:52px;background:#fff;border:3px solid #111;border-radius:2px;"></div>
<div style="left:987px;top:2234px;font-size:47px;line-height:47px;white-space:nowrap;color:#111;-webkit-text-stroke:0.8px #111;">吸附</div>
<div style="left:921px;top:2325px;width:598px;height:98px;background:#fdfdfd;border:2.5px solid #111;"></div>
<div style="left:941px;top:2339px;width:498px;height:70px;background:linear-gradient(90deg,#f1f1f1,#f4f4f4);"></div>
<div style="left:943px;top:2351px;font-size:46px;line-height:46px;white-space:nowrap;color:#606060;letter-spacing:3.5px;">1/8</div>
<svg style="left:1466px;top:2366px;" width="42" height="26" viewBox="0 0 42 26"><path d="M4 4 L19 17 L34 4" fill="none" stroke="#222" stroke-width="2.8" stroke-linecap="round" stroke-linejoin="round"/></svg>
<svg style="left:1552px;top:2302px;" width="26" height="46" viewBox="0 0 26 46"><rect x="0" y="0" width="6" height="6" rx="1.5" fill="#5a5d70"/><rect x="19" y="0" width="6" height="6" rx="1.5" fill="#5a5d70"/><rect x="0" y="19" width="6" height="6" rx="1.5" fill="#5a5d70"/><rect x="19" y="19" width="6" height="6" rx="1.5" fill="#5a5d70"/><rect x="0" y="38" width="6" height="6" rx="1.5" fill="#5a5d70"/><rect x="19" y="38" width="6" height="6" rx="1.5" fill="#5a5d70"/></svg>
<div style="left:1597px;top:2270px;width:918px;height:116px;background:#fbfbfb;border:2px solid #8c8c8c;"></div>
<div style="left:1604px;top:2277px;width:904px;height:103px;background:#2f3345;"></div>
<div style="left:1606px;top:2281px;font-size:98px;line-height:98px;white-space:nowrap;color:#fff;font-family:'Liberation Serif','Noto Serif CJK SC',serif;"><span class="cell" style="width:59px;"><span style="display:inline-block;margin:0 -60px;transform:scaleX(0.97);">0</span></span><span class="cell" style="width:59px;"><span style="display:inline-block;margin:0 -60px;transform:scaleX(0.97);">0</span></span><span class="cell" style="width:59px;">&nbsp;</span><span class="cell" style="width:59px;"><span style="display:inline-block;margin:0 -60px;font-size:82px;position:relative;top:2px;">时</span></span><span class="cell" style="width:59px;">&nbsp;</span><span class="cell" style="width:59px;"><span style="display:inline-block;margin:0 -60px;transform:scaleX(0.97);">0</span></span><span class="cell" style="width:59px;"><span style="display:inline-block;margin:0 -60px;transform:scaleX(0.97);">0</span></span><span class="cell" style="width:59px;">&nbsp;</span><span class="cell" style="width:59px;"><span style="display:inline-block;margin:0 -60px;font-size:82px;position:relative;top:2px;">分</span></span><span class="cell" style="width:59px;">&nbsp;</span><span class="cell" style="width:59px;"><span style="display:inline-block;margin:0 -60px;transform:scaleX(0.97);">0</span></span><span class="cell" style="width:59px;"><span style="display:inline-block;margin:0 -60px;transform:scaleX(0.97);">0</span></span><span class="cell" style="width:59px;">&nbsp;</span><span class="cell" style="width:59px;"><span style="display:inline-block;margin:0 -60px;font-size:82px;position:relative;top:2px;">秒</span></span></div>
<svg style="left:2461px;top:2318px;" width="44" height="26" viewBox="0 0 44 26"><path d="M3 3 H41 L22 23 Z" fill="#fff" stroke="#fff" stroke-width="2" stroke-linejoin="round"/></svg>
<div style="left:2530px;top:2201px;width:2px;height:257px;background:#d9d9d9;"></div>
<div style="left:2542px;top:2201px;width:2px;height:257px;background:#d9d9d9;"></div>
<svg style="left:2556px;top:2302px;" width="26" height="46" viewBox="0 0 26 46"><rect x="0" y="0" width="6" height="6" rx="1.5" fill="#5a5d70"/><rect x="19" y="0" width="6" height="6" rx="1.5" fill="#5a5d70"/><rect x="0" y="19" width="6" height="6" rx="1.5" fill="#5a5d70"/><rect x="19" y="19" width="6" height="6" rx="1.5" fill="#5a5d70"/><rect x="0" y="38" width="6" height="6" rx="1.5" fill="#5a5d70"/><rect x="19" y="38" width="6" height="6" rx="1.5" fill="#5a5d70"/></svg>
<div style="left:2612px;top:2226px;font-size:47px;line-height:47px;white-space:nowrap;color:#111;">选区</div>
<div style="left:2617px;top:2322px;width:90px;height:90px;background:#e0e0e0;"></div>
<svg style="left:2620px;top:2325px" width="80" height="80" viewBox="-40 -40 80 80"><g fill="none" stroke="#111" stroke-width="4.2" stroke-linejoin="round"><path d="M26.5 0.0 L26.5 1.2 L26.4 2.3 L26.3 3.5 L26.0 4.6 L24.7 5.5 L22.3 6.0 L19.9 6.3 L18.5 6.7 L18.1 7.5 L17.8 8.3 L17.4 9.1 L17.0 9.8 L16.5 10.5 L16.1 11.2 L15.6 11.9 L15.1 12.7 L15.4 14.1 L16.3 16.3 L17.1 18.6 L17.0 20.2 L16.1 21.0 L15.2 21.7 L14.2 22.3 L13.3 22.9 L12.2 23.5 L11.2 24.0 L10.1 24.5 L9.0 24.8 L7.6 24.1 L6.0 22.3 L4.5 20.4 L3.4 19.4 L2.6 19.4 L1.7 19.5 L0.9 19.6 L0.0 19.6 L-0.9 19.6 L-1.7 19.5 L-2.6 19.4 L-3.4 19.4 L-4.5 20.4 L-6.0 22.3 L-7.6 24.1 L-9.0 24.8 L-10.1 24.5 L-11.2 24.0 L-12.2 23.5 L-13.2 22.9 L-14.2 22.3 L-15.2 21.7 L-16.1 21.0 L-17.0 20.2 L-17.1 18.6 L-16.3 16.3 L-15.4 14.1 L-15.1 12.7 L-15.6 11.9 L-16.1 11.2 L-16.5 10.5 L-17.0 9.8 L-17.4 9.1 L-17.8 8.3 L-18.1 7.5 L-18.5 6.7 L-19.9 6.3 L-22.3 6.0 L-24.7 5.5 L-26.0 4.6 L-26.3 3.5 L-26.4 2.3 L-26.5 1.2 L-26.5 0.0 L-26.5 -1.2 L-26.4 -2.3 L-26.3 -3.5 L-26.0 -4.6 L-24.7 -5.5 L-22.3 -6.0 L-19.9 -6.3 L-18.5 -6.7 L-18.1 -7.5 L-17.8 -8.3 L-17.4 -9.1 L-17.0 -9.8 L-16.5 -10.5 L-16.1 -11.2 L-15.6 -11.9 L-15.1 -12.7 L-15.4 -14.1 L-16.3 -16.3 L-17.1 -18.6 L-17.0 -20.2 L-16.1 -21.0 L-15.2 -21.7 L-14.2 -22.3 L-13.3 -22.9 L-12.2 -23.5 L-11.2 -24.0 L-10.1 -24.5 L-9.0 -24.8 L-7.6 -24.1 L-6.0 -22.3 L-4.5 -20.4 L-3.4 -19.4 L-2.6 -19.4 L-1.7 -19.5 L-0.9 -19.6 L-0.0 -19.6 L0.9 -19.6 L1.7 -19.5 L2.6 -19.4 L3.4 -19.4 L4.5 -20.4 L6.0 -22.3 L7.6 -24.1 L9.0 -24.8 L10.1 -24.5 L11.2 -24.0 L12.2 -23.5 L13.2 -22.9 L14.2 -22.3 L15.2 -21.7 L16.1 -21.0 L17.0 -20.2 L17.1 -18.6 L16.3 -16.3 L15.4 -14.1 L15.1 -12.7 L15.6 -11.9 L16.1 -11.2 L16.5 -10.5 L17.0 -9.8 L17.4 -9.1 L17.8 -8.3 L18.1 -7.5 L18.5 -6.7 L19.9 -6.3 L22.3 -6.0 L24.7 -5.5 L26.0 -4.6 L26.3 -3.5 L26.4 -2.3 L26.5 -1.2Z"/><circle cx="0" cy="0" r="7.155"/></g></svg>
<div style="left:2733px;top:2226px;width:854px;height:89px;background:#fbfbfb;border:2px solid #8c8c8c;"></div>
<div style="left:2740px;top:2233px;width:840px;height:75px;background:#2f3345;"></div>
<div style="left:2741px;top:2244px;font-size:63px;line-height:63px;white-space:nowrap;color:#fff;font-family:'Liberation Sans','Noto Sans CJK SC',sans-serif;font-weight:400;"><span class="cell" style="width:42.6px;"><span style="display:inline-block;margin:0 -60px;transform:scaleX(0.76);">0</span></span><span class="cell" style="width:42.6px;"><span style="display:inline-block;margin:0 -60px;transform:scaleX(0.76);">0</span></span><span class="cell" style="width:42.6px;">&nbsp;</span><span class="cell" style="width:42.6px;"><span style="display:inline-block;margin:0 -60px;font-size:60px;position:relative;top:-1px;">时</span></span><span class="cell" style="width:42.6px;">&nbsp;</span><span class="cell" style="width:42.6px;"><span style="display:inline-block;margin:0 -60px;transform:scaleX(0.76);">0</span></span><span class="cell" style="width:42.6px;"><span style="display:inline-block;margin:0 -60px;transform:scaleX(0.76);">0</span></span><span class="cell" style="width:42.6px;">&nbsp;</span><span class="cell" style="width:42.6px;"><span style="display:inline-block;margin:0 -60px;font-size:60px;position:relative;top:-1px;">分</span></span><span class="cell" style="width:42.6px;">&nbsp;</span><span class="cell" style="width:42.6px;"><span style="display:inline-block;margin:0 -60px;transform:scaleX(0.76);">0</span></span><span class="cell" style="width:42.6px;"><span style="display:inline-block;margin:0 -60px;transform:scaleX(0.76);">0</span></span><span class="cell" style="width:42.6px;"><span style="display:inline-block;margin:0 -60px;transform:scaleX(0.76);">.</span></span><span class="cell" style="width:42.6px;"><span style="display:inline-block;margin:0 -60px;transform:scaleX(0.76);">0</span></span><span class="cell" style="width:42.6px;"><span style="display:inline-block;margin:0 -60px;transform:scaleX(0.76);">0</span></span><span class="cell" style="width:42.6px;"><span style="display:inline-block;margin:0 -60px;transform:scaleX(0.76);">0</span></span><span class="cell" style="width:42.6px;">&nbsp;</span><span class="cell" style="width:42.6px;"><span style="display:inline-block;margin:0 -60px;font-size:60px;position:relative;top:-1px;">秒</span></span></div>
<svg style="left:3533px;top:2259px;" width="42" height="24" viewBox="0 0 42 24"><path d="M3 3 H39 L21 21 Z" fill="#fff" stroke="#fff" stroke-width="2" stroke-linejoin="round"/></svg>
<div style="left:2733px;top:2322px;width:854px;height:89px;background:#fbfbfb;border:2px solid #8c8c8c;"></div>
<div style="left:2740px;top:2329px;width:840px;height:75px;background:#2f3345;"></div>
<div style="left:2741px;top:2340px;font-size:63px;line-height:63px;white-space:nowrap;color:#fff;font-family:'Liberation Sans','Noto Sans CJK SC',sans-serif;font-weight:400;"><span class="cell" style="width:42.6px;"><span style="display:inline-block;margin:0 -60px;transform:scaleX(0.76);">0</span></span><span class="cell" style="width:42.6px;"><span style="display:inline-block;margin:0 -60px;transform:scaleX(0.76);">0</span></span><span class="cell" style="width:42.6px;">&nbsp;</span><span class="cell" style="width:42.6px;"><span style="display:inline-block;margin:0 -60px;font-size:60px;position:relative;top:-1px;">时</span></span><span class="cell" style="width:42.6px;">&nbsp;</span><span class="cell" style="width:42.6px;"><span style="display:inline-block;margin:0 -60px;transform:scaleX(0.76);">0</span></span><span class="cell" style="width:42.6px;"><span style="display:inline-block;margin:0 -60px;transform:scaleX(0.76);">0</span></span><span class="cell" style="width:42.6px;">&nbsp;</span><span class="cell" style="width:42.6px;"><span style="display:inline-block;margin:0 -60px;font-size:60px;position:relative;top:-1px;">分</span></span><span class="cell" style="width:42.6px;">&nbsp;</span><span class="cell" style="width:42.6px;"><span style="display:inline-block;margin:0 -60px;transform:scaleX(0.76);">0</span></span><span class="cell" style="width:42.6px;"><span style="display:inline-block;margin:0 -60px;transform:scaleX(0.76);">0</span></span><span class="cell" style="width:42.6px;"><span style="display:inline-block;margin:0 -60px;transform:scaleX(0.76);">.</span></span><span class="cell" style="width:42.6px;"><span style="display:inline-block;margin:0 -60px;transform:scaleX(0.76);">0</span></span><span class="cell" style="width:42.6px;"><span style="display:inline-block;margin:0 -60px;transform:scaleX(0.76);">0</span></span><span class="cell" style="width:42.6px;"><span style="display:inline-block;margin:0 -60px;transform:scaleX(0.76);">0</span></span><span class="cell" style="width:42.6px;">&nbsp;</span><span class="cell" style="width:42.6px;"><span style="display:inline-block;margin:0 -60px;font-size:60px;position:relative;top:-1px;">秒</span></span></div>
<svg style="left:3533px;top:2355px;" width="42" height="24" viewBox="0 0 42 24"><path d="M3 3 H39 L21 21 Z" fill="#fff" stroke="#fff" stroke-width="2" stroke-linejoin="round"/></svg>
<svg style="left:17px;top:2494px;" width="26" height="46" viewBox="0 0 26 46"><rect x="0" y="0" width="6" height="6" rx="1.5" fill="#5a5d70"/><rect x="19" y="0" width="6" height="6" rx="1.5" fill="#5a5d70"/><rect x="0" y="19" width="6" height="6" rx="1.5" fill="#5a5d70"/><rect x="19" y="19" width="6" height="6" rx="1.5" fill="#5a5d70"/><rect x="0" y="38" width="6" height="6" rx="1.5" fill="#5a5d70"/><rect x="19" y="38" width="6" height="6" rx="1.5" fill="#5a5d70"/></svg>
<div style="left:53px;top:2468px;width:106px;height:108px;background:#e3e3e5;border-radius:6px;"></div>
<svg style="left:53px;top:2468px;" width="106" height="108" viewBox="0 0 106 108"><path d="M25 27 L78 53 L25 80 Z" fill="#4d9a6f" stroke="#4d9a6f" stroke-width="5" stroke-linejoin="round"/></svg>
<div style="left:180px;top:2495px;width:20px;height:4px;background:#111;border-radius:2px;"></div>
<svg style="left:699px;top:2487px;" width="22" height="22" viewBox="0 0 22 22"><path d="M2 11 H20 M11 2 V20" stroke="#111" stroke-width="3.6" stroke-linecap="round"/></svg>
<div style="left:181px;top:2538px;width:550px;height:2.2px;background:#7f8da3;"></div>
<div style="left:184px;top:2523px;width:1.6px;height:13px;background:#555;"></div>
<div style="left:222px;top:2529px;width:1.6px;height:7px;background:#555;"></div>
<div style="left:261px;top:2529px;width:1.6px;height:7px;background:#555;"></div>
<div style="left:299px;top:2529px;width:1.6px;height:7px;background:#555;"></div>
<div style="left:338px;top:2529px;width:1.6px;height:7px;background:#555;"></div>
<div style="left:376px;top:2529px;width:1.6px;height:7px;background:#555;"></div>
<div style="left:415px;top:2529px;width:1.6px;height:7px;background:#555;"></div>
<div style="left:453px;top:2529px;width:1.6px;height:7px;background:#555;"></div>
<div style="left:491px;top:2529px;width:1.6px;height:7px;background:#555;"></div>
<div style="left:530px;top:2529px;width:1.6px;height:7px;background:#555;"></div>
<div style="left:568px;top:2529px;width:1.6px;height:7px;background:#555;"></div>
<div style="left:607px;top:2529px;width:1.6px;height:7px;background:#555;"></div>
<div style="left:645px;top:2529px;width:1.6px;height:7px;background:#555;"></div>
<div style="left:684px;top:2529px;width:1.6px;height:7px;background:#555;"></div>
<div style="left:722px;top:2523px;width:1.6px;height:13px;background:#555;"></div>
<svg style="left:336px;top:2509px;" width="54" height="54" viewBox="0 0 54 54"><circle cx="27" cy="27" r="21.5" fill="#fff" stroke="#111" stroke-width="4.2"/></svg>
<div style="left:758px;top:2459px;width:1.5px;height:128px;background:#d4d4d4;"></div>
<div style="left:769px;top:2459px;width:1.5px;height:128px;background:#d4d4d4;"></div>
<div style="left:63px;top:2620px;font-size:46px;line-height:46px;white-space:nowrap;color:#111;-webkit-text-stroke:0.5px #111;">已停止.</div>
<div style="left:42px;top:2592px;width:1.5px;height:94px;background:#d6d6d6;"></div>
<div style="left:746px;top:2592px;width:1.5px;height:94px;background:#d6d6d6;"></div>
<div style="left:3622px;top:2592px;width:1.5px;height:94px;background:#d6d6d6;"></div>
<svg style="left:4288px;top:2640px;" width="44" height="44" viewBox="0 0 44 44"><g fill="#333"><rect x="34" y="6" width="5" height="5"/><rect x="20" y="20" width="5" height="5"/><rect x="34" y="20" width="5" height="5"/><rect x="6" y="34" width="5" height="5"/><rect x="20" y="34" width="5" height="5"/><rect x="34" y="34" width="5" height="5"/></g></svg>
<div style="left:0px;top:0px;width:4340px;height:2px;background:#3a3a3a;"></div>
<div style="left:0px;top:0px;width:3px;height:2692px;background:#4a4643;"></div>
<div style="left:4336.8px;top:0px;width:1.8px;height:2692px;background:#2e2e2e;"></div>
<div style="left:4338.6px;top:0px;width:1.4px;height:2692px;background:#c4c4c4;"></div>
<div style="left:0px;top:2688px;width:4340px;height:4px;background:#1c1c1c;"></div>
</div></body></html>
